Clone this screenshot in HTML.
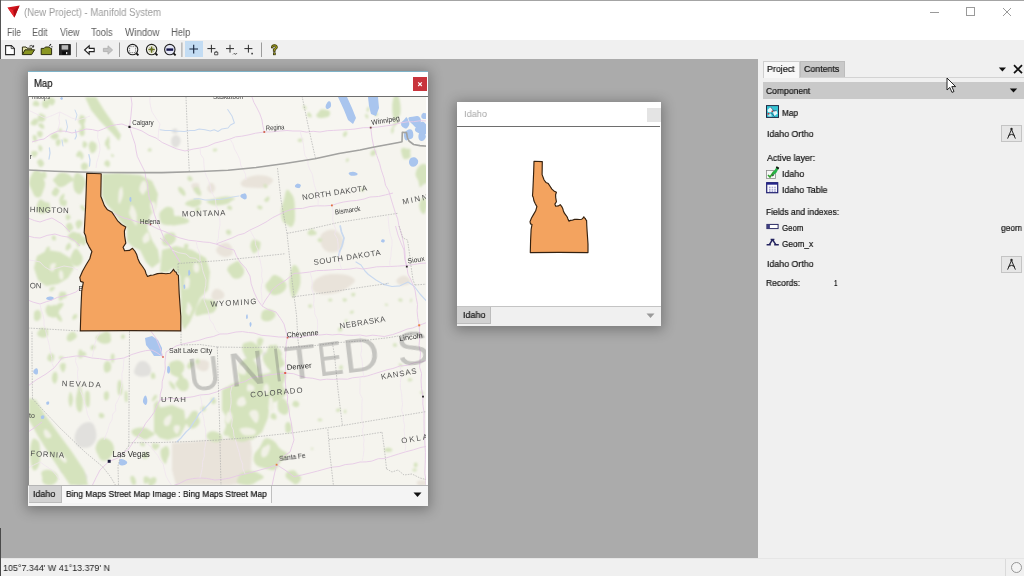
<!DOCTYPE html>
<html>
<head>
<meta charset="utf-8">
<title>(New Project) - Manifold System</title>
<style>
html,body{margin:0;padding:0;}
body{width:1024px;height:576px;overflow:hidden;position:relative;background:#ababab;font-family:"Liberation Sans",sans-serif;font-size:11px;color:#1a1a1a;}
.abs{position:absolute;}
.t{position:absolute;white-space:nowrap;line-height:14px;transform-origin:0 50%;will-change:transform;}
#titlebar{left:0;top:0;width:1024px;height:40px;background:#ffffff;}
#topline{left:0;top:0;width:1024px;height:1px;background:#a4a4a4;}
#leftline{left:0;top:0;width:1px;height:59px;background:#555;}
#toolbar{left:1px;top:40px;width:1023px;height:19px;background:#f0f0f0;}
#panel{left:757.5px;top:59px;width:267px;height:499px;background:#f0f0f0;}
#status{left:0;top:558.3px;width:1024px;height:18px;background:#f0f0f0;border-top:1px solid #e6e6e6;box-sizing:border-box;}

.sep{position:absolute;top:42px;width:1px;height:15px;background:#a0a0a0;}
.win{position:absolute;background:#fff;box-shadow:0 2px 12px 2px rgba(0,0,0,0.3);}
.p{font-size:11px;color:#1c1c1c;}
</style>
</head>
<body>
<!-- app chrome -->
<div id="titlebar" class="abs"></div>
<div id="topline" class="abs"></div>
<div id="toolbar" class="abs"></div>
<div id="leftline" class="abs"></div>
<div class="abs" style="left:0;top:528px;width:1.3px;height:48px;background:#4a4a4a;z-index:5;"></div>
<svg class="abs" style="left:7px;top:5px" width="15" height="14" viewBox="0 0 15 14"><path d="M0.5 2.6 L12.6 0.6 L7.4 12.6 Z" fill="#d0121b"/><path d="M0.5 2.6 L7.4 12.6 L6.4 5.2 Z" fill="#e8262c"/><path d="M6.4 5.2 L12.6 0.6 L7.4 12.6 Z" fill="#b00c14"/></svg>
<!-- toolbar icons -->
<svg class="abs" style="left:0;top:40px" width="300" height="19" viewBox="0 40 300 19">
 <!-- new -->
 <path d="M5.6 45.6 H11.4 L14.4 48.4 V54.6 H5.6 Z" fill="#fff" stroke="#2a2a2a" stroke-width="1.1"/><path d="M11.2 45.6 V48.6 H14.4" fill="none" stroke="#2a2a2a" stroke-width="0.8"/>
 <!-- open -->
 <path d="M22.4 54.4 V47 H26 L27 48.2 H31.4 V49.6" fill="#e8e6b0" stroke="#2c2c10" stroke-width="1"/>
 <path d="M22.4 54.6 L25 49.8 H34.6 L31.6 54.6 Z" fill="#8a9622" stroke="#2c2c10" stroke-width="1"/>
 <path d="M29.4 46.2 q2.4 -1.8 4 0.6 M33.6 45.2 v1.8 h-1.8" fill="none" stroke="#222" stroke-width="0.9"/>
 <!-- folder w/ arrow -->
 <path d="M41.2 54.6 V48.4 H44.2 L45.4 47 H49.4 L50.4 48.4 H51.6 V54.6 Z" fill="#8a9622" stroke="#2c2c10" stroke-width="1"/>
 <path d="M49.4 45.8 l1.6 -1.6 M51.4 46.6 l1 0.4" stroke="#222" stroke-width="1.1"/>
 <!-- save -->
 <rect x="59.5" y="44.6" width="10.8" height="10.2" fill="#262626" stroke="#111" stroke-width="0.8"/>
 <rect x="61.6" y="45.2" width="6.6" height="4.4" fill="#b9b9b9"/>
 <rect x="62.2" y="51.4" width="5.4" height="3.4" fill="#0c0c0c"/><rect x="66" y="52" width="1.3" height="2.2" fill="#d8d8d8"/>
 <rect x="76" y="42.5" width="1" height="14.5" fill="#9c9c9c"/>
 <!-- back -->
 <path d="M84.6 50 L89.2 45.8 V48.4 H94.2 V51.6 H89.2 V54.2 Z" fill="#fdfdfd" stroke="#222" stroke-width="1.1" stroke-linejoin="miter"/>
 <!-- forward (disabled) -->
 <path d="M112.6 50 L108 45.8 V48.4 H103.4 V51.6 H108 V54.2 Z" fill="#c4c4c4" stroke="#b0b0b0" stroke-width="0.9"/>
 <rect x="119" y="42.5" width="1" height="14.5" fill="#9c9c9c"/>
 <!-- zoom box -->
 <circle cx="132.6" cy="49.6" r="5.2" fill="#f6f6f6" stroke="#222" stroke-width="1.1"/>
 <rect x="129.6" y="46.6" width="6" height="6" fill="none" stroke="#444" stroke-width="0.7" stroke-dasharray="1 0.8"/>
 <path d="M136.4 53.4 L138.4 55.4" stroke="#111" stroke-width="1.8"/>
 <!-- zoom in -->
 <circle cx="151.6" cy="49.6" r="5.2" fill="#f1f1e4" stroke="#222" stroke-width="1.1"/>
 <path d="M148.4 49.6 h6.4 M151.6 46.4 v6.4" stroke="#66701a" stroke-width="1.5"/>
 <path d="M149.6 47.6 l1 1 m2 0 l1 -1 m-4 4 l1 -1 m2 0 l1 1" stroke="#333" stroke-width="0.6"/>
 <path d="M155.4 53.4 L157.4 55.4" stroke="#111" stroke-width="1.8"/>
 <!-- zoom out -->
 <circle cx="169.8" cy="49.6" r="5.2" fill="#e4e6f6" stroke="#222" stroke-width="1.1"/>
 <rect x="166.4" y="48.4" width="6.8" height="2.4" fill="#15154a"/>
 <path d="M173.6 53.4 L175.6 55.4" stroke="#111" stroke-width="1.8"/>
 <rect x="181.4" y="42.5" width="1" height="14.5" fill="#9c9c9c"/>
 <!-- selected + -->
 <rect x="185" y="41" width="18" height="16" fill="#c3dcf3"/>
 <path d="M189.4 49 h8.6 M193.7 44.8 v8.6" stroke="#14233c" stroke-width="1.1"/>
 <path d="M207.4 48.6 h8 M211.4 44.8 v7.8" stroke="#2c2c2c" stroke-width="1"/>
 <path d="M214.6 52.2 h3.2 v2.6 h-3.2 z M215.2 52.2 q1.2 -1.6 2.2 0" fill="none" stroke="#333" stroke-width="0.8"/>
 <path d="M226 48.6 h8 M230 44.8 v7.8" stroke="#2c2c2c" stroke-width="1"/>
 <path d="M233 54.4 q1 -1.8 2 -0.4 q1 1 2 -1" fill="none" stroke="#444" stroke-width="0.8"/>
 <path d="M244.4 48.6 h8 M248.4 44.8 v7.8" stroke="#2c2c2c" stroke-width="1"/>
 <rect x="251.4" y="52.8" width="1.4" height="1.6" fill="#222"/>
 <rect x="261" y="42.5" width="1" height="14.5" fill="#9c9c9c"/>
 <!-- help -->
 <path d="M271.4 48 q-0.4 -3.4 3 -3.4 q3.2 0.2 3 2.8 q-0.2 1.6 -2.2 2.4 v1.8 h-1.8 v-2.8 q2 -0.6 2 -1.6 q0 -1 -1.2 -1 q-1.2 0 -1.2 1.6 z" fill="#a8a418" stroke="#2a2a08" stroke-width="0.8"/>
 <rect x="273.4" y="52.8" width="1.9" height="2" fill="#a8a418" stroke="#2a2a08" stroke-width="0.7"/>
</svg>
<!-- window controls -->
<svg class="abs" style="left:920px;top:4px" width="100" height="18" viewBox="0 0 100 18">
<path d="M10 8.5 H19" stroke="#9a9a9a" stroke-width="1" fill="none"/>
<rect x="46.5" y="3.5" width="8" height="8" stroke="#9a9a9a" stroke-width="1" fill="none"/>
<path d="M83 4 L91 12 M91 4 L83 12" stroke="#9a9a9a" stroke-width="1" fill="none"/>
</svg>

<!-- MAP WINDOW -->
<div class="win" id="mapwin" style="left:28px;top:71px;width:400px;height:434.6px;">
  <div class="abs" style="left:0;top:0;width:400px;height:1px;background:#7fb3c8;"></div>
  <div class="abs" style="left:385px;top:6px;width:14px;height:14px;background:#c8343c;"></div>
  <svg class="abs" style="left:385px;top:6px" width="14" height="14"><path d="M5.2 5.4 L8.8 9 M8.8 5.4 L5.2 9" stroke="#fff" stroke-width="1.2"/></svg>
  <div class="abs" style="left:0;top:25px;width:400px;height:1px;background:#6e6e6e;"></div>
  <div class="abs" style="left:0;top:25px;width:1px;height:408px;background:#8c8c8c;"></div>
  <div class="abs" id="mapbox" style="left:1px;top:26px;width:397.4px;height:388px;background:#f4f2ea;overflow:hidden;"><svg class="abs" style="left:0;top:0" width="398" height="388" viewBox="29 97 398 388">
<defs><filter id="b1" x="-5%" y="-5%" width="110%" height="110%"><feGaussianBlur stdDeviation="0.9"/></filter><filter id="b2"><feGaussianBlur stdDeviation="0.5"/></filter><filter id="b3"><feGaussianBlur stdDeviation="0.35"/></filter></defs>
<rect x="29" y="97" width="398" height="388" fill="#f5f4ee"/>
<path d="M28.0 170.0 L55.0 171.3 L80.0 172.0 L105.0 172.5 L130.0 172.6 L162.0 172.6 L200.0 171.5 L228.0 170.2 L256.0 167.5 L285.0 163.5 L315.0 158.7 L339.0 153.5 L360.0 150.0 L373.0 147.3 L400.0 142.2 L402.0 141.8 L402.3 132.2 L406.5 132.6 L407.5 138.0 L409.0 141.0 L413.6 144.5 L420.0 145.6 L428.0 146.2 L428 96 L28 96 Z" fill="#f7f6f1"/>
<g filter="url(#b1)" fill="#e9e3da"><path d="M272.0 178.5 Q274.1 180.3 272.0 182.4 Q269.8 184.5 266.6 186.4 Q263.3 188.3 258.6 187.9 Q254.0 187.5 248.8 187.5 Q243.7 187.5 241.6 185.4 Q239.5 183.3 242.1 181.1 Q244.7 178.9 248.4 177.3 Q252.1 175.7 257.0 175.3 Q261.8 174.9 265.8 175.7 Q269.8 176.6 272.0 178.5Z"/><path d="M199.3 185.1 Q199.2 186.5 199.5 188.0 Q199.8 189.6 198.3 190.0 Q196.8 190.4 195.5 190.3 Q194.3 190.3 193.3 189.5 Q192.4 188.8 191.9 187.6 Q191.4 186.5 191.4 185.0 Q191.4 183.6 192.9 183.2 Q194.3 182.9 195.5 182.9 Q196.7 182.8 198.0 183.3 Q199.4 183.7 199.3 185.1Z"/><path d="M215.0 186.8 Q215.5 188.0 215.0 189.2 Q214.5 190.4 213.7 191.7 Q212.9 192.9 211.5 192.9 Q210.1 192.9 209.0 191.9 Q207.8 191.0 207.3 189.5 Q206.7 188.0 207.5 186.7 Q208.4 185.5 209.2 184.0 Q209.9 182.6 211.5 182.7 Q213.0 182.9 213.8 184.2 Q214.5 185.5 215.0 186.8Z"/><path d="M232.4 248.4 Q233.2 250.2 232.9 252.4 Q232.6 254.5 230.2 255.8 Q227.8 257.1 224.9 256.9 Q222.0 256.6 220.0 255.3 Q217.9 253.9 216.6 252.1 Q215.3 250.2 216.6 248.4 Q217.9 246.5 219.8 244.8 Q221.6 243.1 224.9 242.8 Q228.2 242.5 229.9 244.5 Q231.6 246.5 232.4 248.4Z"/><path d="M223.8 293.1 Q224.7 294.8 224.2 296.6 Q223.7 298.4 221.6 299.0 Q219.6 299.6 217.5 300.2 Q215.4 300.9 213.4 299.8 Q211.4 298.7 211.3 296.7 Q211.3 294.8 211.9 293.1 Q212.4 291.5 213.9 290.0 Q215.4 288.6 217.6 288.9 Q219.9 289.2 221.4 290.4 Q223.0 291.5 223.8 293.1Z"/><path d="M342.5 237.4 Q344.2 241.1 343.1 245.0 Q341.9 248.9 338.7 250.7 Q335.4 252.4 332.2 252.5 Q329.0 252.6 326.1 251.0 Q323.3 249.5 321.8 246.3 Q320.3 243.2 320.1 239.2 Q319.9 235.1 323.1 232.7 Q326.3 230.2 330.2 229.7 Q334.1 229.1 337.4 231.4 Q340.7 233.7 342.5 237.4Z"/><path d="M353.3 278.0 Q356.7 280.5 353.0 283.6 Q349.3 286.7 344.9 289.4 Q340.6 292.1 333.4 293.5 Q326.1 294.9 319.7 293.7 Q313.3 292.4 312.4 289.2 Q311.5 286.1 312.8 283.0 Q314.1 280.0 319.1 277.3 Q324.2 274.6 331.1 274.1 Q338.1 273.5 344.0 274.5 Q350.0 275.4 353.3 278.0Z"/><path d="M172.0 443.0 L200.0 441.0 L232.0 438.0 L250.0 437.0 L252.0 452.0 L250.0 482.0 L230.0 485.0 L176.0 485.0 L172.0 470.0Z"/><path d="M209.1 364.0 Q208.9 366.0 208.7 367.7 Q208.5 369.4 206.8 370.6 Q205.2 371.7 203.2 371.2 Q201.2 370.7 199.6 369.9 Q198.1 369.1 196.4 367.5 Q194.8 366.0 195.8 364.1 Q196.8 362.1 198.6 360.8 Q200.5 359.4 202.9 359.7 Q205.3 360.0 207.3 361.1 Q209.3 362.1 209.1 364.0Z"/><path d="M409.9 279.5 Q411.0 281.0 410.2 282.7 Q409.4 284.3 407.1 284.7 Q404.8 285.0 402.8 285.5 Q400.7 286.0 399.3 284.8 Q397.8 283.7 396.7 282.3 Q395.6 281.0 396.7 279.7 Q397.8 278.3 399.3 277.2 Q400.8 276.2 403.1 275.8 Q405.5 275.5 407.2 276.7 Q408.9 277.9 409.9 279.5Z"/><path d="M427.6 482.0 Q427.5 483.0 427.2 483.9 Q426.9 484.8 425.3 485.3 Q423.8 485.8 421.8 486.1 Q419.8 486.3 418.7 485.5 Q417.5 484.6 417.0 483.8 Q416.4 483.0 416.7 482.1 Q416.9 481.1 418.6 480.8 Q420.4 480.5 422.2 480.3 Q423.9 480.0 425.8 480.5 Q427.7 480.9 427.6 482.0Z"/></g>
<g filter="url(#b1)" fill="#e1e0dd"><path d="M180.3 138.8 Q181.0 141.0 180.2 143.0 Q179.3 145.1 177.9 146.4 Q176.4 147.8 174.6 147.5 Q172.7 147.1 171.9 145.1 Q171.1 143.1 171.1 141.0 Q171.1 139.0 172.1 137.4 Q173.2 135.8 174.8 135.3 Q176.4 134.7 178.0 135.7 Q179.6 136.7 180.3 138.8Z"/><path d="M96.4 434.4 Q96.7 438.7 94.4 442.5 Q92.0 446.2 88.6 447.2 Q85.2 448.1 81.5 447.6 Q77.8 447.0 75.7 442.7 Q73.6 438.4 75.5 433.3 Q77.3 428.1 80.9 425.0 Q84.5 421.9 88.6 421.9 Q92.7 421.8 94.4 425.9 Q96.2 430.0 96.4 434.4Z"/><path d="M68.3 464.4 Q69.0 466.6 68.2 468.7 Q67.5 470.8 66.2 472.1 Q64.9 473.3 63.3 473.0 Q61.7 472.7 60.8 470.7 Q59.9 468.8 60.1 466.6 Q60.2 464.4 61.1 462.9 Q62.1 461.3 63.4 461.0 Q64.8 460.6 66.2 461.4 Q67.6 462.2 68.3 464.4Z"/><path d="M150.4 366.9 Q151.6 369.6 150.9 372.6 Q150.1 375.6 147.2 376.1 Q144.3 376.7 141.5 376.8 Q138.8 376.9 136.0 375.0 Q133.3 373.1 134.4 369.9 Q135.4 366.8 136.9 364.2 Q138.4 361.5 141.5 361.1 Q144.6 360.7 146.9 362.5 Q149.3 364.2 150.4 366.9Z"/><path d="M86.4 474.8 Q88.2 477.4 86.3 479.9 Q84.4 482.5 82.3 484.6 Q80.3 486.8 77.9 485.3 Q75.4 483.8 74.0 481.8 Q72.7 479.8 71.5 476.9 Q70.3 474.0 72.6 472.1 Q74.9 470.1 77.4 470.3 Q79.9 470.4 82.3 471.3 Q84.6 472.1 86.4 474.8Z"/><path d="M177.5 130.1 Q177.9 131.0 177.7 132.1 Q177.5 133.1 176.5 133.3 Q175.4 133.5 174.6 133.4 Q173.7 133.3 172.7 132.8 Q171.7 132.2 171.8 131.0 Q171.9 129.9 172.8 129.3 Q173.7 128.8 174.6 128.5 Q175.5 128.2 176.3 128.7 Q177.2 129.2 177.5 130.1Z"/><path d="M251.7 354.0 Q252.2 355.0 251.8 356.0 Q251.3 357.0 250.2 357.7 Q249.2 358.4 247.9 358.1 Q246.5 357.9 245.9 357.0 Q245.2 356.0 245.0 355.0 Q244.9 353.9 245.7 353.0 Q246.6 352.1 247.9 351.9 Q249.2 351.7 250.2 352.4 Q251.2 353.1 251.7 354.0Z"/><path d="M267.8 353.7 Q268.3 354.5 267.9 355.4 Q267.5 356.2 266.5 356.8 Q265.6 357.4 264.7 356.9 Q263.7 356.3 262.7 355.9 Q261.8 355.5 262.3 354.6 Q262.7 353.8 263.0 353.0 Q263.3 352.1 264.4 352.0 Q265.5 352.0 266.4 352.4 Q267.3 352.9 267.8 353.7Z"/><path d="M280.9 352.1 Q281.6 353.0 281.0 354.0 Q280.4 355.0 279.4 355.4 Q278.5 355.9 277.4 355.9 Q276.3 355.9 275.5 355.0 Q274.8 354.2 274.9 353.1 Q275.1 351.9 275.8 351.2 Q276.6 350.5 277.5 350.3 Q278.5 350.1 279.4 350.6 Q280.3 351.1 280.9 352.1Z"/></g>
<g filter="url(#b1)" fill="#d5e3bd"><path d="M85.0 97.0 L96.0 97.0 L104.0 110.0 L113.0 123.0 L121.0 135.0 L119.0 141.0 L112.0 133.0 L100.0 121.0 L91.0 110.0Z"/><path d="M85.3 118.3 Q85.6 120.0 85.1 121.4 Q84.6 122.8 84.0 124.5 Q83.3 126.2 82.2 125.2 Q81.1 124.2 79.9 123.9 Q78.7 123.6 78.5 121.8 Q78.3 120.0 79.0 118.7 Q79.6 117.4 80.2 115.8 Q80.8 114.3 81.8 115.1 Q82.9 115.9 84.0 116.2 Q85.1 116.6 85.3 118.3Z"/><path d="M96.8 146.0 Q96.7 147.5 96.4 148.7 Q96.1 149.9 95.3 151.2 Q94.5 152.5 92.8 153.1 Q91.2 153.8 90.5 151.9 Q89.9 150.0 89.3 148.8 Q88.8 147.5 88.7 145.8 Q88.6 144.0 89.8 142.4 Q91.0 140.9 92.8 141.4 Q94.6 142.0 95.7 143.2 Q96.8 144.5 96.8 146.0Z"/><path d="M87.2 143.4 Q87.7 144.5 86.8 145.2 Q86.0 146.0 85.7 147.3 Q85.4 148.5 84.6 148.0 Q83.8 147.4 83.4 146.8 Q82.9 146.1 82.7 145.3 Q82.6 144.5 82.6 143.6 Q82.7 142.7 83.1 141.6 Q83.6 140.5 84.4 141.2 Q85.1 141.8 85.9 142.1 Q86.6 142.3 87.2 143.4Z"/><path d="M54.9 100.1 Q55.3 101.5 54.7 102.7 Q54.0 103.9 53.1 104.9 Q52.3 105.9 51.2 105.3 Q50.1 104.7 49.4 104.1 Q48.6 103.4 48.2 102.5 Q47.7 101.5 47.6 100.0 Q47.4 98.6 48.6 98.0 Q49.8 97.4 51.0 97.6 Q52.1 97.7 53.3 98.2 Q54.4 98.7 54.9 100.1Z"/><path d="M44.5 181.0 Q45.7 184.0 44.6 187.0 Q43.4 190.1 42.0 193.9 Q40.7 197.8 37.6 197.4 Q34.5 197.0 33.2 193.4 Q31.9 189.8 30.2 186.9 Q28.6 184.0 29.5 180.4 Q30.5 176.8 32.3 173.2 Q34.2 169.6 37.4 170.2 Q40.5 170.8 42.0 174.4 Q43.4 178.0 44.5 181.0Z"/><path d="M72.7 177.9 Q74.9 180.0 71.6 181.6 Q68.2 183.2 66.6 184.8 Q64.9 186.3 61.7 187.0 Q58.4 187.7 57.0 185.5 Q55.6 183.3 53.8 181.6 Q52.1 180.0 54.1 178.5 Q56.1 177.0 57.4 174.8 Q58.6 172.7 62.1 172.5 Q65.6 172.3 68.0 174.0 Q70.4 175.7 72.7 177.9Z"/><path d="M85.3 180.8 Q86.4 184.0 84.8 186.6 Q83.3 189.2 82.2 191.9 Q81.1 194.6 79.1 194.3 Q77.0 194.0 75.5 192.1 Q73.9 190.2 73.5 187.1 Q73.2 184.0 73.2 180.5 Q73.2 176.9 74.9 174.4 Q76.7 172.0 78.7 173.3 Q80.8 174.6 82.6 176.1 Q84.3 177.5 85.3 180.8Z"/><path d="M49.7 204.3 Q49.2 206.0 50.4 208.0 Q51.5 210.1 49.1 211.2 Q46.8 212.4 43.7 213.2 Q40.6 214.0 38.2 212.2 Q35.9 210.4 36.6 208.2 Q37.4 206.0 37.7 204.4 Q38.1 202.8 39.7 201.2 Q41.2 199.5 43.4 201.0 Q45.5 202.5 47.9 202.5 Q50.3 202.6 49.7 204.3Z"/><path d="M102.0 174.0 L118.0 173.0 L140.0 175.0 L152.0 181.0 L158.0 194.0 L156.0 207.0 L150.0 216.0 L147.0 228.0 L152.0 240.0 L158.0 250.0 L160.0 262.0 L152.0 268.0 L146.0 262.0 L140.0 250.0 L133.0 247.0 L127.0 241.0 L127.0 228.0 L120.0 221.0 L112.0 210.0 L106.0 204.0 L102.0 196.0Z"/><path d="M148.1 185.8 Q148.5 189.0 147.5 191.7 Q146.5 194.5 144.2 196.0 Q141.8 197.6 138.5 199.1 Q135.2 200.6 133.3 197.5 Q131.4 194.5 130.3 191.8 Q129.1 189.0 129.8 185.9 Q130.5 182.8 132.8 179.9 Q135.1 177.0 138.5 178.6 Q141.8 180.3 144.8 181.5 Q147.7 182.7 148.1 185.8Z"/><path d="M174.7 216.8 Q175.7 219.2 174.6 221.8 Q173.4 224.5 170.2 225.1 Q167.0 225.7 163.8 224.6 Q160.6 223.6 160.2 220.6 Q159.7 217.7 159.3 215.4 Q159.0 213.1 160.6 211.4 Q162.2 209.7 164.6 207.9 Q167.0 206.0 170.3 207.1 Q173.6 208.1 173.7 211.3 Q173.7 214.5 174.7 216.8Z"/><path d="M175.2 234.5 Q175.8 236.5 175.9 238.3 Q175.9 240.2 174.5 241.8 Q173.1 243.5 170.9 244.8 Q168.7 246.1 166.0 245.9 Q163.3 245.7 162.5 243.7 Q161.7 241.6 162.5 239.8 Q163.2 238.0 163.8 236.0 Q164.3 234.0 166.8 233.2 Q169.3 232.4 172.0 232.4 Q174.7 232.4 175.2 234.5Z"/><path d="M134.3 204.7 Q135.4 209.0 134.2 213.1 Q133.0 217.2 130.7 219.3 Q128.5 221.4 125.9 221.7 Q123.4 221.9 121.2 219.6 Q119.1 217.2 119.2 213.1 Q119.4 209.0 119.0 204.6 Q118.5 200.1 120.9 197.7 Q123.3 195.3 126.0 195.0 Q128.8 194.8 131.0 197.6 Q133.2 200.4 134.3 204.7Z"/><path d="M187.6 219.3 Q190.1 220.5 188.8 222.0 Q187.5 223.5 183.7 224.0 Q179.9 224.5 175.8 225.3 Q171.7 226.2 169.8 224.5 Q167.9 222.9 166.8 221.7 Q165.8 220.5 166.3 219.2 Q166.8 217.8 169.9 217.1 Q172.9 216.3 176.7 216.1 Q180.6 215.8 182.8 217.0 Q185.1 218.1 187.6 219.3Z"/><path d="M201.1 200.6 Q201.2 201.9 201.1 203.1 Q201.1 204.3 199.4 205.2 Q197.7 206.2 195.5 207.0 Q193.2 207.7 191.7 206.9 Q190.2 206.0 187.2 205.4 Q184.1 204.9 185.5 203.1 Q186.8 201.3 189.5 200.5 Q192.2 199.7 194.4 199.1 Q196.6 198.6 198.8 198.9 Q201.1 199.2 201.1 200.6Z"/><path d="M234.1 197.9 Q236.2 198.7 233.5 199.8 Q230.9 200.8 229.7 202.6 Q228.4 204.3 221.7 205.1 Q214.9 205.9 211.8 204.7 Q208.8 203.4 207.0 202.4 Q205.3 201.4 208.9 200.3 Q212.5 199.2 215.1 198.5 Q217.8 197.7 221.7 197.0 Q225.7 196.3 228.9 196.7 Q232.1 197.2 234.1 197.9Z"/><path d="M162.0 250.0 L176.0 246.0 L192.0 250.0 L206.0 258.0 L210.0 272.0 L208.0 290.0 L200.0 298.0 L196.0 308.0 L190.0 322.0 L184.0 330.0 L181.0 322.0 L181.0 300.0 L180.0 276.0 L176.0 271.0 L173.0 268.0 L168.0 272.0 L160.0 272.0Z"/><path d="M216.2 308.5 Q214.6 312.5 211.0 313.3 Q207.3 314.1 205.2 314.0 Q203.1 314.0 199.0 315.5 Q194.9 317.1 195.1 313.0 Q195.3 309.0 197.2 306.3 Q199.1 303.6 200.5 300.5 Q201.8 297.5 204.4 298.7 Q206.9 300.0 209.8 299.6 Q212.8 299.2 215.3 301.8 Q217.7 304.4 216.2 308.5Z"/><path d="M37.0 256.0 L48.0 250.0 L60.0 252.0 L70.0 258.0 L74.0 268.0 L68.0 278.0 L58.0 284.0 L46.0 286.0 L38.0 280.0 L34.0 268.0Z"/><path d="M81.6 235.8 Q83.5 237.0 82.4 238.6 Q81.3 240.3 79.1 240.7 Q76.9 241.1 74.9 241.2 Q73.0 241.4 71.7 240.4 Q70.5 239.4 68.7 238.2 Q66.9 237.0 68.0 235.5 Q69.2 234.0 70.9 232.7 Q72.5 231.4 74.7 232.1 Q76.9 232.7 78.3 233.6 Q79.7 234.5 81.6 235.8Z"/><path d="M81.4 254.7 Q83.0 256.5 82.6 259.7 Q82.2 262.9 80.4 264.6 Q78.6 266.3 76.5 266.2 Q74.5 266.1 72.8 264.3 Q71.2 262.5 70.7 259.5 Q70.2 256.5 71.5 254.4 Q72.8 252.3 73.8 250.3 Q74.8 248.3 76.4 248.7 Q78.1 249.1 78.9 251.0 Q79.7 252.9 81.4 254.7Z"/><path d="M40.9 314.6 Q40.9 316.0 40.8 317.3 Q40.8 318.5 39.9 319.3 Q39.1 320.1 37.8 320.7 Q36.6 321.3 35.2 320.5 Q33.9 319.7 34.0 317.9 Q34.1 316.0 34.0 314.1 Q33.9 312.3 35.2 311.1 Q36.4 309.9 38.0 309.9 Q39.6 309.9 40.3 311.6 Q41.0 313.3 40.9 314.6Z"/><path d="M59.4 309.6 Q59.0 312.0 58.5 313.7 Q58.1 315.4 56.8 316.4 Q55.5 317.4 54.0 317.5 Q52.5 317.5 50.6 316.9 Q48.8 316.4 47.7 314.2 Q46.6 312.0 47.4 309.5 Q48.2 307.0 50.2 306.2 Q52.2 305.4 54.1 305.1 Q56.0 304.7 57.9 305.9 Q59.7 307.1 59.4 309.6Z"/><path d="M48.1 330.9 Q47.5 332.5 47.9 333.9 Q48.3 335.4 46.8 336.6 Q45.3 337.8 43.1 337.7 Q40.8 337.5 39.1 336.5 Q37.4 335.5 37.2 334.0 Q37.1 332.5 38.1 331.4 Q39.1 330.4 40.0 328.9 Q40.8 327.5 42.7 328.1 Q44.7 328.7 46.7 329.0 Q48.7 329.4 48.1 330.9Z"/><path d="M76.6 334.9 Q77.4 336.5 76.1 337.7 Q74.8 339.0 73.6 339.8 Q72.5 340.5 70.7 341.2 Q69.0 341.9 67.7 340.7 Q66.4 339.5 66.7 338.0 Q67.0 336.5 67.4 335.5 Q67.9 334.4 68.8 333.8 Q69.8 333.1 71.3 332.1 Q72.9 331.2 74.4 332.3 Q75.8 333.4 76.6 334.9Z"/><path d="M110.6 335.7 Q110.2 337.5 111.0 339.4 Q111.7 341.4 109.3 342.8 Q106.9 344.2 103.8 343.7 Q100.6 343.2 98.9 341.8 Q97.2 340.4 96.0 339.0 Q94.8 337.5 96.4 336.2 Q98.1 335.0 99.9 334.4 Q101.6 333.8 104.3 332.3 Q106.9 330.8 108.9 332.4 Q111.0 334.0 110.6 335.7Z"/><path d="M59.4 266.9 Q60.1 269.0 59.8 271.4 Q59.6 273.8 57.0 274.7 Q54.4 275.5 51.8 276.1 Q49.2 276.6 46.9 275.1 Q44.7 273.7 44.8 271.3 Q44.9 269.0 45.5 267.1 Q46.2 265.3 48.0 264.1 Q49.7 262.9 52.0 263.0 Q54.2 263.0 56.5 263.9 Q58.7 264.7 59.4 266.9Z"/><path d="M260.6 244.1 Q260.2 246.5 260.0 248.3 Q259.7 250.1 258.3 250.7 Q256.8 251.3 255.1 252.8 Q253.4 254.2 252.4 252.1 Q251.4 250.0 250.8 248.2 Q250.1 246.5 250.5 244.5 Q250.8 242.5 252.1 240.7 Q253.4 238.8 255.3 239.7 Q257.1 240.6 259.1 241.2 Q261.1 241.7 260.6 244.1Z"/><path d="M244.0 272.8 Q243.3 275.5 241.1 277.2 Q238.8 278.9 235.9 278.8 Q233.0 278.8 231.5 276.4 Q229.9 274.0 228.2 272.0 Q226.4 269.9 227.7 267.7 Q229.0 265.4 231.0 264.4 Q233.0 263.4 235.7 261.7 Q238.4 260.0 240.0 262.8 Q241.6 265.5 243.2 267.8 Q244.7 270.1 244.0 272.8Z"/><path d="M285.2 282.2 Q287.4 285.0 285.9 288.3 Q284.4 291.7 281.6 293.0 Q278.8 294.4 275.8 295.0 Q272.9 295.6 270.3 293.6 Q267.6 291.7 266.0 288.3 Q264.3 285.0 267.1 282.5 Q269.8 280.1 271.3 277.1 Q272.8 274.2 275.7 275.1 Q278.6 276.1 280.8 277.8 Q283.0 279.4 285.2 282.2Z"/><path d="M275.2 313.0 Q276.1 315.0 274.9 316.8 Q273.7 318.5 272.0 319.7 Q270.2 320.9 267.9 321.3 Q265.5 321.6 263.2 320.5 Q260.9 319.4 261.1 317.2 Q261.2 315.0 261.6 313.1 Q262.0 311.2 263.9 310.3 Q265.8 309.3 268.0 309.3 Q270.2 309.3 272.2 310.2 Q274.3 311.1 275.2 313.0Z"/><path d="M255.0 345.7 Q254.8 348.5 254.4 350.7 Q254.0 353.0 252.4 354.3 Q250.8 355.5 248.7 356.5 Q246.7 357.5 245.1 355.5 Q243.6 353.4 242.6 351.0 Q241.6 348.5 242.3 345.7 Q242.9 342.9 245.1 342.7 Q247.4 342.4 249.2 341.8 Q250.9 341.1 253.0 342.0 Q255.1 342.9 255.0 345.7Z"/><path d="M300.4 277.0 Q301.0 283.0 299.5 287.1 Q298.0 291.2 296.7 293.6 Q295.5 296.1 293.9 297.4 Q292.2 298.7 291.2 294.8 Q290.2 290.9 289.5 286.9 Q288.8 283.0 289.5 279.1 Q290.2 275.1 291.1 270.3 Q292.0 265.5 294.1 265.0 Q296.1 264.5 298.0 267.8 Q299.8 271.0 300.4 277.0Z"/><path d="M294.7 204.1 Q294.8 209.5 295.0 215.5 Q295.3 221.5 293.3 225.0 Q291.3 228.5 289.3 226.2 Q287.2 224.0 284.7 223.2 Q282.3 222.5 281.3 216.0 Q280.4 209.5 282.2 204.8 Q284.1 200.2 285.2 194.0 Q286.3 187.9 288.7 190.4 Q291.1 192.8 292.8 195.7 Q294.6 198.7 294.7 204.1Z"/><path d="M315.7 231.8 Q317.3 232.5 316.6 233.7 Q315.9 235.0 314.2 235.1 Q312.6 235.2 311.4 235.4 Q310.2 235.7 309.0 235.1 Q307.8 234.6 307.6 233.5 Q307.4 232.5 308.0 231.7 Q308.5 230.8 309.4 230.2 Q310.3 229.5 311.7 229.1 Q313.1 228.7 313.6 229.9 Q314.1 231.0 315.7 231.8Z"/><path d="M330.2 112.8 Q330.2 114.5 329.3 115.8 Q328.5 117.1 326.5 117.3 Q324.5 117.5 322.8 117.9 Q321.1 118.3 319.0 117.8 Q316.9 117.3 316.4 115.9 Q315.9 114.5 317.4 113.5 Q318.8 112.5 319.5 110.8 Q320.2 109.0 322.9 109.2 Q325.5 109.5 327.9 110.3 Q330.3 111.1 330.2 112.8Z"/><path d="M400.5 106.0 Q400.7 109.0 400.5 112.0 Q400.3 115.1 399.0 116.2 Q397.7 117.3 396.1 119.8 Q394.5 122.3 393.6 118.7 Q392.7 115.1 392.4 112.0 Q392.2 109.0 392.2 105.6 Q392.3 102.3 393.3 98.5 Q394.4 94.8 396.5 95.1 Q398.5 95.4 399.4 99.2 Q400.3 103.0 400.5 106.0Z"/><path d="M410.5 150.8 Q409.8 153.0 410.5 155.2 Q411.1 157.4 409.2 158.2 Q407.3 158.9 405.4 159.2 Q403.6 159.4 402.9 157.5 Q402.1 155.7 401.8 154.3 Q401.5 153.0 401.0 151.0 Q400.5 149.1 402.2 148.3 Q403.9 147.5 405.3 148.2 Q406.8 148.8 408.9 148.7 Q411.1 148.5 410.5 150.8Z"/><path d="M428.3 170.6 Q428.5 175.0 428.1 179.2 Q427.7 183.3 425.6 183.4 Q423.4 183.6 421.6 186.2 Q419.7 188.9 419.1 184.5 Q418.4 180.2 416.6 177.6 Q414.7 175.0 416.0 171.6 Q417.3 168.1 418.8 166.4 Q420.3 164.7 422.1 164.0 Q423.9 163.2 426.0 164.7 Q428.1 166.1 428.3 170.6Z"/><path d="M426.9 203.0 Q427.3 205.5 426.7 207.7 Q426.1 209.8 425.4 212.3 Q424.6 214.7 423.1 213.9 Q421.7 213.1 420.8 211.4 Q419.9 209.8 419.5 207.6 Q419.0 205.5 419.5 203.5 Q420.0 201.4 420.9 199.8 Q421.7 198.1 423.1 197.8 Q424.4 197.5 425.5 199.0 Q426.6 200.6 426.9 203.0Z"/><path d="M72.6 396.6 Q73.3 399.0 72.7 401.8 Q72.1 404.7 71.3 406.3 Q70.5 408.0 69.8 406.2 Q69.0 404.3 68.6 401.7 Q68.2 399.0 68.7 396.6 Q69.2 394.2 69.8 392.6 Q70.5 391.1 71.2 392.7 Q71.8 394.2 72.6 396.6Z"/><path d="M82.6 394.9 Q83.4 400.0 82.7 405.4 Q82.0 410.9 80.8 411.8 Q79.5 412.7 78.3 411.6 Q77.1 410.5 76.1 405.2 Q75.2 400.0 76.4 395.7 Q77.5 391.5 78.5 387.0 Q79.5 382.6 80.7 386.2 Q81.9 389.8 82.6 394.9Z"/><path d="M89.8 395.3 Q90.0 399.0 89.8 402.7 Q89.6 406.4 88.5 407.0 Q87.5 407.5 86.6 406.5 Q85.7 405.4 85.2 402.2 Q84.8 399.0 85.0 395.1 Q85.3 391.1 86.4 390.9 Q87.5 390.7 88.5 391.1 Q89.6 391.6 89.8 395.3Z"/><path d="M108.8 393.3 Q109.3 395.5 108.8 397.6 Q108.3 399.7 107.1 400.2 Q106.0 400.7 105.0 399.9 Q104.0 399.1 103.9 397.3 Q103.7 395.5 104.0 393.9 Q104.3 392.3 105.1 391.8 Q106.0 391.2 107.2 391.2 Q108.4 391.1 108.8 393.3Z"/><path d="M111.0 364.8 Q111.5 367.0 110.9 369.1 Q110.4 371.1 109.2 371.8 Q108.0 372.5 106.3 372.7 Q104.7 372.8 104.0 369.9 Q103.3 367.0 104.1 364.3 Q104.9 361.6 106.5 361.2 Q108.0 360.8 109.2 361.7 Q110.5 362.7 111.0 364.8Z"/><path d="M122.4 386.1 Q122.7 389.0 122.4 391.8 Q122.1 394.5 121.0 395.1 Q120.0 395.6 119.0 395.1 Q117.9 394.5 117.6 391.8 Q117.4 389.0 117.4 385.5 Q117.4 382.0 118.7 380.6 Q120.0 379.1 121.1 381.2 Q122.2 383.2 122.4 386.1Z"/><path d="M127.6 394.2 Q127.7 396.5 127.7 399.3 Q127.7 402.2 126.9 402.3 Q126.0 402.4 125.3 401.6 Q124.7 400.8 124.6 398.6 Q124.5 396.5 124.6 394.3 Q124.7 392.2 125.3 391.1 Q126.0 390.1 126.7 391.0 Q127.4 391.9 127.6 394.2Z"/><path d="M103.9 414.6 Q104.5 415.5 104.2 416.7 Q104.0 418.0 102.7 418.1 Q101.5 418.1 100.4 417.9 Q99.3 417.7 99.0 416.6 Q98.7 415.5 98.9 414.3 Q99.1 413.1 100.3 413.0 Q101.5 412.8 102.4 413.2 Q103.4 413.6 103.9 414.6Z"/><path d="M57.6 375.5 Q57.7 378.0 57.3 379.8 Q56.8 381.7 55.9 383.0 Q55.0 384.3 53.9 383.3 Q52.8 382.3 52.2 380.2 Q51.6 378.0 52.2 375.7 Q52.7 373.4 53.9 372.4 Q55.0 371.4 56.3 372.2 Q57.5 373.0 57.6 375.5Z"/><path d="M65.7 364.9 Q65.8 367.0 65.4 368.6 Q64.9 370.2 64.0 371.7 Q63.0 373.2 62.1 371.6 Q61.3 369.9 60.5 368.5 Q59.7 367.0 60.2 365.1 Q60.7 363.2 61.9 363.2 Q63.0 363.1 64.2 363.0 Q65.5 362.9 65.7 364.9Z"/><path d="M29.0 398.0 L36.0 400.0 L45.0 415.0 L58.0 433.0 L72.0 452.0 L84.0 470.0 L88.0 485.0 L70.0 485.0 L60.0 470.0 L48.0 452.0 L38.0 436.0 L29.0 420.0Z"/><path d="M113.6 445.9 Q114.8 449.5 113.3 452.8 Q111.7 456.1 109.4 458.4 Q107.1 460.7 103.9 460.8 Q100.8 461.0 99.4 457.8 Q98.0 454.6 96.5 452.0 Q94.9 449.5 95.8 446.4 Q96.7 443.3 98.7 440.6 Q100.8 437.8 104.0 437.9 Q107.2 438.0 109.8 440.2 Q112.5 442.3 113.6 445.9Z"/><path d="M39.9 447.3 Q40.2 453.0 39.9 458.8 Q39.6 464.6 38.0 467.5 Q36.3 470.4 34.5 470.4 Q32.7 470.4 31.6 466.2 Q30.5 461.9 30.3 457.5 Q30.0 453.0 30.4 448.7 Q30.7 444.5 31.8 441.1 Q32.9 437.7 34.4 438.6 Q35.9 439.4 37.7 440.5 Q39.5 441.7 39.9 447.3Z"/><path d="M57.4 475.2 Q58.3 477.5 57.6 479.9 Q56.8 482.2 54.4 483.7 Q52.0 485.2 49.0 485.3 Q45.9 485.4 43.8 483.6 Q41.8 481.9 42.2 479.7 Q42.7 477.5 41.6 474.9 Q40.4 472.3 43.1 470.8 Q45.8 469.3 48.8 469.8 Q51.8 470.4 54.1 471.7 Q56.4 473.0 57.4 475.2Z"/><path d="M160.0 408.0 L172.0 405.0 L184.0 410.0 L186.0 424.0 L180.0 436.0 L168.0 440.0 L160.0 438.0 L154.0 432.0 L154.0 404.0 L158.0 400.0Z"/><path d="M169.3 451.6 Q169.4 455.0 168.3 457.0 Q167.2 458.9 166.6 461.8 Q166.1 464.8 164.7 463.5 Q163.3 462.3 162.6 460.6 Q161.8 458.9 161.2 457.0 Q160.6 455.0 160.5 452.0 Q160.4 449.0 161.9 448.5 Q163.4 448.0 164.7 446.6 Q166.1 445.2 167.6 446.7 Q169.2 448.2 169.3 451.6Z"/><path d="M183.2 363.6 Q184.8 365.6 184.3 368.2 Q183.8 370.8 182.3 372.8 Q180.9 374.9 178.4 375.9 Q175.9 376.8 173.3 375.6 Q170.7 374.3 169.6 371.4 Q168.6 368.5 168.8 365.5 Q169.1 362.6 171.6 361.8 Q174.1 361.0 175.9 360.5 Q177.7 360.0 179.7 360.8 Q181.6 361.6 183.2 363.6Z"/><path d="M153.2 432.5 Q156.0 434.0 153.2 435.5 Q150.4 437.0 148.1 438.5 Q145.9 440.0 142.7 438.9 Q139.6 437.8 137.4 437.1 Q135.3 436.4 133.6 435.2 Q131.9 434.0 131.5 432.0 Q131.1 430.0 134.5 428.8 Q137.8 427.5 142.0 427.6 Q146.2 427.6 148.2 429.3 Q150.3 431.0 153.2 432.5Z"/><path d="M199.5 423.1 Q198.4 425.6 196.2 427.0 Q193.9 428.5 191.6 428.6 Q189.2 428.8 188.5 426.8 Q187.8 424.8 185.4 423.2 Q183.1 421.5 185.9 419.5 Q188.8 417.4 190.3 414.1 Q191.7 410.7 194.9 410.7 Q198.0 410.6 197.9 414.1 Q197.7 417.6 199.1 419.1 Q200.5 420.6 199.5 423.1Z"/><path d="M188.0 381.6 Q189.2 384.0 188.7 387.0 Q188.2 390.0 186.0 390.7 Q183.8 391.4 182.1 391.0 Q180.4 390.6 179.2 389.2 Q178.0 387.9 176.2 385.9 Q174.4 384.0 176.2 382.1 Q178.0 380.1 179.0 378.1 Q180.1 376.0 181.8 377.0 Q183.5 378.0 185.2 378.6 Q186.9 379.2 188.0 381.6Z"/><path d="M222.0 390.0 L232.0 384.0 L246.0 380.0 L258.0 376.0 L270.0 380.0 L276.0 392.0 L270.0 404.0 L268.0 418.0 L262.0 432.0 L252.0 440.0 L240.0 436.0 L232.0 440.0 L224.0 432.0 L228.0 420.0 L222.0 410.0Z"/><path d="M284.9 451.7 Q290.9 454.5 285.4 457.7 Q279.8 460.8 278.1 466.1 Q276.4 471.4 271.0 469.9 Q265.7 468.4 260.1 466.9 Q254.6 465.3 253.7 459.9 Q252.8 454.5 256.6 451.0 Q260.3 447.6 262.3 442.2 Q264.4 436.9 269.8 438.9 Q275.2 440.8 277.1 444.8 Q278.9 448.8 284.9 451.7Z"/><path d="M284.5 380.5 Q280.9 385.8 284.5 389.0 Q288.0 392.2 284.5 396.0 Q281.0 399.7 275.4 401.8 Q269.8 403.9 264.3 404.2 Q258.9 404.5 253.3 405.2 Q247.6 405.9 243.7 403.8 Q239.7 401.6 233.3 399.4 Q226.8 397.3 234.4 392.9 Q241.9 388.5 239.6 383.5 Q237.3 378.5 243.1 374.7 Q249.0 371.0 256.0 373.3 Q263.1 375.7 271.3 371.9 Q279.5 368.0 283.8 371.6 Q288.0 375.3 284.5 380.5Z"/><path d="M261.3 349.1 Q263.9 351.0 261.8 353.3 Q259.7 355.6 258.0 357.3 Q256.3 358.9 254.0 359.0 Q251.7 359.0 248.6 358.4 Q245.6 357.9 245.6 354.4 Q245.6 351.0 246.8 348.6 Q248.1 346.2 249.9 344.5 Q251.6 342.8 253.9 343.2 Q256.1 343.6 257.4 345.4 Q258.7 347.1 261.3 349.1Z"/><path d="M280.7 352.4 Q280.9 357.1 283.4 360.7 Q285.9 364.3 282.6 366.3 Q279.2 368.3 276.5 371.7 Q273.9 375.0 270.9 371.6 Q267.9 368.2 266.0 365.7 Q264.1 363.2 263.1 359.8 Q262.2 356.4 264.7 354.3 Q267.2 352.2 269.8 350.6 Q272.3 349.0 276.5 348.3 Q280.6 347.7 280.7 352.4Z"/><path d="M263.5 413.8 Q266.2 419.0 264.3 424.6 Q262.5 430.3 258.1 433.5 Q253.7 436.7 248.9 439.7 Q244.0 442.7 238.3 441.3 Q232.6 439.8 230.3 434.3 Q228.0 428.8 225.8 423.9 Q223.6 419.0 228.1 415.5 Q232.6 412.1 233.2 406.2 Q233.7 400.3 238.9 400.4 Q244.0 400.6 249.2 400.3 Q254.4 400.1 257.7 404.4 Q260.9 408.7 263.5 413.8Z"/><path d="M258.2 367.4 Q259.9 370.1 258.4 372.8 Q256.9 375.5 256.8 380.6 Q256.7 385.7 252.1 383.3 Q247.5 380.8 243.8 380.7 Q240.0 380.6 238.8 377.3 Q237.6 374.0 238.3 370.8 Q239.1 367.6 240.6 363.6 Q242.1 359.7 246.9 357.9 Q251.6 356.1 254.1 360.4 Q256.6 364.7 258.2 367.4Z"/><path d="M280.9 352.1 Q283.0 354.0 281.1 356.0 Q279.3 358.0 277.6 360.0 Q275.9 361.9 273.2 361.5 Q270.4 361.0 268.9 359.3 Q267.4 357.6 266.8 355.8 Q266.1 354.0 266.7 352.1 Q267.2 350.3 268.3 347.2 Q269.4 344.2 272.6 345.3 Q275.8 346.4 277.3 348.3 Q278.9 350.2 280.9 352.1Z"/><path d="M287.8 403.5 Q289.5 406.0 288.9 409.8 Q288.3 413.6 286.0 414.4 Q283.8 415.2 282.2 414.3 Q280.5 413.5 279.3 412.1 Q278.0 410.8 277.8 408.4 Q277.5 406.0 277.5 403.3 Q277.6 400.7 279.1 399.8 Q280.6 398.8 282.1 398.4 Q283.6 398.0 284.9 399.5 Q286.2 401.0 287.8 403.5Z"/><path d="M221.0 434.5 Q222.3 436.0 222.2 438.2 Q222.0 440.3 219.4 441.5 Q216.8 442.6 214.2 442.0 Q211.7 441.4 209.8 440.4 Q207.9 439.3 206.9 437.7 Q205.9 436.0 206.9 434.4 Q208.0 432.7 209.9 431.8 Q211.8 430.8 213.8 431.3 Q215.8 431.8 217.7 432.4 Q219.6 432.9 221.0 434.5Z"/><path d="M262.4 475.4 Q265.6 477.5 261.4 479.2 Q257.2 480.9 255.1 482.8 Q253.0 484.6 248.8 484.9 Q244.7 485.2 240.4 484.0 Q236.2 482.9 237.2 480.2 Q238.2 477.5 239.1 475.6 Q239.9 473.7 242.8 472.6 Q245.6 471.4 249.2 471.1 Q252.8 470.8 256.0 472.0 Q259.2 473.2 262.4 475.4Z"/><path d="M299.4 475.6 Q301.9 477.0 300.9 479.5 Q299.8 482.0 297.7 483.6 Q295.6 485.1 293.6 483.4 Q291.5 481.7 290.2 480.9 Q288.9 480.0 287.0 478.5 Q285.1 477.0 285.6 474.5 Q286.0 471.9 288.4 471.2 Q290.9 470.4 293.1 470.2 Q295.3 470.0 296.1 472.1 Q297.0 474.1 299.4 475.6Z"/><path d="M392.0 448.9 Q392.7 449.7 392.2 450.6 Q391.8 451.5 390.0 451.8 Q388.3 452.1 386.6 451.8 Q384.9 451.4 384.1 450.6 Q383.4 449.7 384.3 448.9 Q385.3 448.2 386.8 447.9 Q388.3 447.6 389.8 447.9 Q391.3 448.2 392.0 448.9Z"/><path d="M322.0 239.3 Q322.5 240.0 322.1 240.8 Q321.7 241.6 320.5 241.9 Q319.3 242.2 318.4 241.6 Q317.4 240.9 317.5 240.0 Q317.5 239.1 318.5 238.6 Q319.4 238.0 320.4 238.3 Q321.5 238.6 322.0 239.3Z"/><path d="M347.0 299.4 Q347.6 300.0 346.9 300.5 Q346.1 301.0 345.2 301.5 Q344.3 302.1 343.7 301.4 Q343.1 300.7 342.6 299.8 Q342.2 299.0 343.3 298.6 Q344.4 298.1 345.4 298.4 Q346.4 298.8 347.0 299.4Z"/><path d="M353.8 311.3 Q353.9 312.0 353.6 312.6 Q353.3 313.2 352.4 313.5 Q351.4 313.9 350.4 313.4 Q349.5 312.9 349.9 312.1 Q350.3 311.4 350.9 311.0 Q351.6 310.7 352.6 310.6 Q353.6 310.6 353.8 311.3Z"/><path d="M332.1 299.3 Q332.6 300.0 332.0 300.7 Q331.5 301.3 330.5 301.4 Q329.5 301.5 328.6 301.1 Q327.6 300.8 328.0 300.1 Q328.4 299.4 329.0 299.0 Q329.5 298.5 330.5 298.5 Q331.5 298.6 332.1 299.3Z"/><path d="M340.6 409.1 Q341.2 410.0 340.4 410.8 Q339.7 411.5 338.5 411.8 Q337.3 412.2 336.5 411.5 Q335.8 410.8 335.9 410.1 Q336.1 409.3 336.8 408.9 Q337.5 408.5 338.8 408.4 Q340.0 408.2 340.6 409.1Z"/><path d="M322.1 419.4 Q322.8 420.0 322.1 420.6 Q321.4 421.2 320.5 421.2 Q319.6 421.3 318.7 421.0 Q317.7 420.8 317.6 420.0 Q317.5 419.1 318.5 418.7 Q319.5 418.3 320.4 418.6 Q321.3 418.8 322.1 419.4Z"/><path d="M402.2 299.2 Q402.8 300.0 402.4 300.9 Q402.0 301.8 400.7 301.6 Q399.5 301.5 399.0 301.0 Q398.4 300.6 398.2 299.9 Q398.0 299.3 398.7 298.8 Q399.5 298.3 400.6 298.4 Q401.7 298.4 402.2 299.2Z"/><path d="M396.7 344.4 Q397.0 345.0 396.9 345.8 Q396.8 346.7 395.6 346.8 Q394.4 347.0 393.6 346.4 Q392.7 345.8 392.9 345.1 Q393.1 344.4 393.7 343.6 Q394.3 342.8 395.3 343.3 Q396.4 343.8 396.7 344.4Z"/><path d="M412.3 379.3 Q413.0 380.0 412.1 380.6 Q411.3 381.2 410.4 381.3 Q409.5 381.5 408.5 381.2 Q407.4 380.9 407.7 380.1 Q408.0 379.3 408.7 378.5 Q409.3 377.8 410.4 378.2 Q411.6 378.6 412.3 379.3Z"/><path d="M416.7 469.3 Q417.0 470.0 416.7 470.6 Q416.3 471.2 415.4 471.4 Q414.5 471.7 413.5 471.3 Q412.5 470.9 412.3 469.9 Q412.1 469.0 413.4 468.8 Q414.6 468.6 415.5 468.7 Q416.5 468.7 416.7 469.3Z"/><path d="M364.0 189.1 Q364.1 190.0 364.0 190.9 Q364.0 191.8 362.8 191.6 Q361.6 191.4 361.0 191.0 Q360.4 190.6 360.3 190.0 Q360.3 189.4 360.9 188.9 Q361.5 188.4 362.7 188.3 Q363.9 188.3 364.0 189.1Z"/><path d="M302.5 139.1 Q303.1 140.0 302.4 140.8 Q301.8 141.6 300.5 141.9 Q299.3 142.3 298.2 141.6 Q297.2 141.0 297.6 140.1 Q298.0 139.3 298.8 138.9 Q299.5 138.6 300.8 138.4 Q302.0 138.2 302.5 139.1Z"/><path d="M217.1 149.4 Q217.9 150.0 217.0 150.5 Q216.1 151.0 215.3 151.5 Q214.4 151.9 213.7 151.3 Q212.9 150.7 212.9 150.0 Q212.9 149.3 213.7 148.9 Q214.5 148.4 215.4 148.6 Q216.2 148.9 217.1 149.4Z"/><path d="M151.5 149.4 Q151.8 150.0 151.6 150.6 Q151.4 151.2 150.4 151.4 Q149.5 151.6 148.3 151.3 Q147.1 151.0 147.7 150.2 Q148.3 149.4 148.8 148.6 Q149.3 147.8 150.3 148.3 Q151.3 148.8 151.5 149.4Z"/><path d="M61.9 129.4 Q62.3 130.0 62.1 130.8 Q61.9 131.7 60.6 131.9 Q59.3 132.1 58.6 131.4 Q57.8 130.7 58.1 130.1 Q58.4 129.4 58.9 128.9 Q59.5 128.3 60.4 128.5 Q61.4 128.7 61.9 129.4Z"/><path d="M42.5 119.2 Q43.1 120.0 42.2 120.6 Q41.3 121.1 40.4 121.4 Q39.5 121.6 38.4 121.3 Q37.2 121.0 37.8 120.2 Q38.4 119.4 38.9 118.9 Q39.5 118.3 40.7 118.3 Q41.9 118.3 42.5 119.2Z"/><path d="M58.7 135.8 Q59.1 137.5 57.6 138.3 Q56.2 139.1 55.2 139.4 Q54.1 139.7 53.1 139.2 Q52.1 138.7 50.8 137.5 Q49.4 136.3 50.9 135.3 Q52.3 134.4 53.6 133.5 Q55.0 132.6 56.6 133.3 Q58.3 134.1 58.7 135.8Z"/><path d="M42.1 132.1 Q42.9 133.0 42.7 134.1 Q42.5 135.2 41.8 136.5 Q41.1 137.8 39.7 137.4 Q38.2 136.9 37.7 135.7 Q37.2 134.6 37.0 133.3 Q36.7 132.0 37.9 131.5 Q39.2 130.9 40.3 131.1 Q41.4 131.3 42.1 132.1Z"/><path d="M37.5 154.0 Q36.8 154.9 36.2 156.1 Q35.5 157.3 33.9 157.1 Q32.3 156.8 31.8 155.4 Q31.2 153.9 31.3 152.3 Q31.4 150.8 33.0 150.9 Q34.5 151.0 35.6 151.1 Q36.6 151.2 37.4 152.1 Q38.2 153.0 37.5 154.0Z"/><path d="M66.6 138.9 Q67.6 139.0 67.9 140.2 Q68.2 141.3 67.4 141.9 Q66.6 142.5 65.9 142.5 Q65.1 142.6 64.3 142.2 Q63.6 141.8 63.3 141.0 Q63.1 140.1 63.3 139.1 Q63.5 138.1 64.5 138.4 Q65.5 138.8 66.6 138.9Z"/><path d="M42.3 115.7 Q42.2 117.0 41.3 118.1 Q40.3 119.3 39.3 119.5 Q38.3 119.8 37.9 118.8 Q37.5 117.9 38.0 116.5 Q38.5 115.1 39.4 114.2 Q40.3 113.4 41.0 113.2 Q41.8 113.1 42.1 113.8 Q42.4 114.4 42.3 115.7Z"/><path d="M60.3 139.9 Q61.4 141.2 60.8 142.6 Q60.2 143.9 59.7 144.8 Q59.1 145.6 57.9 145.9 Q56.8 146.3 56.2 144.7 Q55.6 143.0 55.7 141.8 Q55.9 140.6 56.5 140.0 Q57.1 139.3 58.1 139.0 Q59.2 138.6 60.3 139.9Z"/><path d="M86.2 163.3 Q87.1 164.5 87.7 166.1 Q88.4 167.7 87.0 169.0 Q85.6 170.2 83.8 170.2 Q81.9 170.3 81.4 168.6 Q80.8 166.9 81.0 165.7 Q81.2 164.5 82.0 163.8 Q82.8 163.0 84.1 162.6 Q85.4 162.2 86.2 163.3Z"/><path d="M48.9 102.1 Q49.7 104.0 49.1 105.7 Q48.6 107.3 47.4 107.9 Q46.2 108.4 44.9 108.2 Q43.7 108.0 42.7 106.6 Q41.8 105.3 42.0 103.4 Q42.2 101.6 43.5 100.5 Q44.8 99.5 46.4 99.9 Q48.1 100.3 48.9 102.1Z"/><path d="M83.2 154.7 Q83.7 155.8 83.3 156.9 Q82.8 158.0 82.4 159.3 Q81.9 160.7 81.3 159.5 Q80.7 158.4 80.3 157.2 Q79.9 156.0 80.2 154.7 Q80.5 153.4 81.0 152.4 Q81.5 151.4 82.1 152.5 Q82.7 153.6 83.2 154.7Z"/><path d="M83.8 123.4 Q84.5 125.7 84.8 127.3 Q85.1 128.8 84.6 129.5 Q84.2 130.2 83.5 130.6 Q82.7 131.1 81.9 129.0 Q81.0 126.9 80.8 125.2 Q80.7 123.5 81.0 122.5 Q81.4 121.6 82.3 121.3 Q83.1 121.1 83.8 123.4Z"/><path d="M37.8 119.3 Q38.6 120.5 38.1 121.7 Q37.7 123.0 36.9 124.3 Q36.1 125.6 34.3 125.6 Q32.6 125.5 31.2 124.6 Q29.7 123.8 30.9 122.4 Q32.0 121.0 32.8 120.0 Q33.6 118.9 35.3 118.5 Q37.0 118.1 37.8 119.3Z"/><path d="M39.0 102.6 Q39.9 103.6 39.4 105.0 Q38.9 106.4 37.3 106.3 Q35.6 106.1 34.5 106.1 Q33.3 106.0 32.9 105.1 Q32.6 104.2 32.9 103.3 Q33.2 102.4 34.2 101.2 Q35.2 100.1 36.6 100.8 Q38.0 101.5 39.0 102.6Z"/><path d="M42.1 147.3 Q42.9 148.0 42.4 149.1 Q41.9 150.1 41.3 151.1 Q40.7 152.0 39.9 151.3 Q39.1 150.6 38.8 149.5 Q38.5 148.5 38.4 147.2 Q38.3 146.0 39.1 145.2 Q39.9 144.4 40.6 145.5 Q41.2 146.5 42.1 147.3Z"/><path d="M45.5 118.4 Q45.2 120.0 43.9 121.1 Q42.6 122.1 41.2 121.4 Q39.7 120.7 38.8 119.7 Q37.8 118.7 38.3 117.4 Q38.7 116.1 39.7 115.3 Q40.7 114.5 42.0 114.7 Q43.3 114.8 44.5 115.8 Q45.7 116.7 45.5 118.4Z"/><path d="M44.4 127.4 Q44.6 128.7 43.3 128.7 Q42.0 128.8 41.0 128.2 Q40.0 127.7 39.2 126.8 Q38.3 126.0 38.2 124.6 Q38.1 123.3 39.4 123.3 Q40.8 123.3 41.9 123.6 Q43.1 124.0 43.6 125.0 Q44.2 126.1 44.4 127.4Z"/><path d="M43.7 114.7 Q45.1 114.6 45.0 115.9 Q44.9 117.3 43.8 118.0 Q42.7 118.8 41.7 119.1 Q40.7 119.4 39.7 119.2 Q38.7 119.0 38.4 117.9 Q38.2 116.8 39.0 115.7 Q39.8 114.5 41.0 114.6 Q42.3 114.7 43.7 114.7Z"/><path d="M36.6 136.9 Q36.8 138.3 36.9 139.8 Q36.9 141.3 36.0 141.7 Q35.1 142.0 34.3 141.5 Q33.6 140.9 33.2 139.7 Q32.8 138.6 32.6 136.9 Q32.5 135.2 33.6 135.1 Q34.6 135.1 35.5 135.3 Q36.4 135.6 36.6 136.9Z"/><path d="M83.4 129.8 Q84.4 130.6 84.6 131.9 Q84.9 133.2 84.4 134.6 Q84.0 136.0 82.4 136.2 Q80.8 136.4 80.0 134.8 Q79.2 133.3 79.2 132.1 Q79.1 130.8 79.5 129.5 Q79.8 128.1 81.1 128.6 Q82.4 129.1 83.4 129.8Z"/><path d="M80.9 154.1 Q80.4 154.9 79.7 156.3 Q79.0 157.7 78.1 157.2 Q77.1 156.7 76.4 155.9 Q75.7 155.2 76.5 153.9 Q77.2 152.7 78.1 151.5 Q79.1 150.3 80.1 150.8 Q81.0 151.2 81.2 152.2 Q81.3 153.2 80.9 154.1Z"/><path d="M42.2 160.1 Q43.0 161.3 43.8 162.5 Q44.6 163.7 43.7 165.0 Q42.9 166.4 41.2 166.9 Q39.5 167.5 38.8 165.9 Q38.1 164.3 37.3 163.0 Q36.5 161.7 37.6 160.7 Q38.7 159.6 40.1 159.2 Q41.5 158.9 42.2 160.1Z"/><path d="M87.7 166.4 Q87.0 167.6 86.4 168.3 Q85.9 169.1 85.0 169.4 Q84.2 169.7 83.5 169.1 Q82.8 168.6 83.5 167.4 Q84.2 166.2 84.8 165.3 Q85.3 164.3 86.2 164.0 Q87.2 163.6 87.8 164.4 Q88.4 165.2 87.7 166.4Z"/><path d="M109.4 145.5 Q109.9 146.2 109.9 147.0 Q109.9 147.7 109.8 148.8 Q109.7 149.8 108.7 149.7 Q107.8 149.6 107.3 148.5 Q106.8 147.5 106.9 146.7 Q107.1 145.9 107.2 144.9 Q107.3 143.8 108.1 144.3 Q109.0 144.8 109.4 145.5Z"/><path d="M108.9 161.0 Q110.0 162.2 110.0 163.7 Q109.9 165.2 109.3 166.3 Q108.6 167.4 107.5 166.7 Q106.3 166.0 105.2 165.4 Q104.0 164.9 104.3 163.6 Q104.6 162.3 105.1 161.4 Q105.6 160.5 106.7 160.2 Q107.9 159.9 108.9 161.0Z"/><path d="M86.7 145.2 Q87.5 145.6 86.8 146.1 Q86.2 146.7 85.6 147.0 Q84.9 147.4 84.1 147.4 Q83.3 147.4 82.8 147.0 Q82.3 146.5 82.6 145.9 Q82.9 145.3 83.7 145.1 Q84.5 144.9 85.2 144.9 Q85.9 144.9 86.7 145.2Z"/><path d="M109.6 140.8 Q109.9 142.5 109.1 144.9 Q108.2 147.4 107.4 146.7 Q106.5 146.1 105.7 145.9 Q104.9 145.8 104.9 143.6 Q105.0 141.4 106.0 140.1 Q107.0 138.8 108.0 136.9 Q109.0 135.1 109.2 137.1 Q109.3 139.1 109.6 140.8Z"/><path d="M114.0 156.0 Q113.9 156.6 113.4 156.8 Q112.9 157.0 112.3 156.9 Q111.6 156.7 111.3 156.1 Q111.0 155.6 110.9 155.1 Q110.9 154.6 111.3 154.3 Q111.7 154.0 112.4 154.3 Q113.0 154.5 113.5 155.0 Q114.0 155.4 114.0 156.0Z"/><path d="M70.2 245.9 Q69.7 247.8 69.0 249.2 Q68.2 250.6 67.5 250.4 Q66.8 250.3 66.0 250.1 Q65.3 250.0 65.6 248.3 Q65.9 246.5 66.7 245.4 Q67.6 244.2 68.5 243.1 Q69.5 242.1 70.1 243.1 Q70.7 244.1 70.2 245.9Z"/><path d="M49.7 249.4 Q49.0 251.1 47.9 252.1 Q46.7 253.1 45.6 253.7 Q44.5 254.3 44.6 253.0 Q44.7 251.7 45.3 250.4 Q45.8 249.0 46.8 247.6 Q47.8 246.2 48.6 246.4 Q49.3 246.6 49.8 247.2 Q50.4 247.7 49.7 249.4Z"/><path d="M73.1 227.0 Q73.7 228.5 72.4 229.5 Q71.1 230.4 69.8 231.5 Q68.4 232.6 67.8 231.1 Q67.1 229.5 66.3 227.9 Q65.4 226.3 66.5 224.5 Q67.7 222.7 69.4 222.7 Q71.1 222.7 71.8 224.1 Q72.5 225.5 73.1 227.0Z"/><path d="M81.7 237.7 Q81.7 240.5 80.9 242.6 Q80.2 244.7 79.0 246.6 Q77.8 248.6 77.2 246.1 Q76.6 243.7 75.8 241.7 Q75.0 239.8 75.7 236.9 Q76.5 233.9 77.9 233.3 Q79.4 232.7 80.6 233.8 Q81.8 234.9 81.7 237.7Z"/><path d="M66.9 202.3 Q66.5 203.6 66.4 205.0 Q66.3 206.4 64.7 206.3 Q63.2 206.1 61.7 205.6 Q60.2 205.2 59.8 203.7 Q59.5 202.2 60.8 201.6 Q62.2 201.0 63.3 200.2 Q64.5 199.5 65.9 200.2 Q67.3 200.9 66.9 202.3Z"/><path d="M86.2 239.9 Q86.4 241.2 86.1 242.6 Q85.8 244.1 84.4 245.1 Q83.0 246.1 82.1 244.6 Q81.2 243.2 80.1 241.8 Q78.9 240.3 80.3 239.1 Q81.6 237.8 82.9 236.7 Q84.3 235.5 85.1 237.0 Q86.0 238.6 86.2 239.9Z"/><path d="M55.6 237.1 Q56.0 238.0 55.7 239.4 Q55.3 240.8 54.4 240.6 Q53.4 240.3 52.8 239.9 Q52.2 239.5 51.9 238.4 Q51.6 237.4 52.1 236.5 Q52.7 235.5 53.4 235.5 Q54.1 235.4 54.7 235.7 Q55.3 236.1 55.6 237.1Z"/><path d="M59.3 191.7 Q58.5 193.2 57.5 195.0 Q56.5 196.8 54.8 196.2 Q53.2 195.7 52.1 194.4 Q51.0 193.0 52.2 191.4 Q53.5 189.8 54.5 188.2 Q55.5 186.6 56.7 187.6 Q57.9 188.6 59.0 189.4 Q60.0 190.2 59.3 191.7Z"/><path d="M45.5 172.1 Q46.5 173.5 46.5 174.9 Q46.5 176.2 46.2 177.6 Q45.8 178.9 44.5 178.5 Q43.2 178.2 42.2 177.2 Q41.2 176.1 40.7 174.6 Q40.2 173.0 41.4 172.7 Q42.6 172.3 43.6 171.5 Q44.6 170.7 45.5 172.1Z"/><path d="M82.2 222.9 Q82.2 224.9 81.2 226.3 Q80.2 227.7 78.9 228.7 Q77.6 229.6 77.0 228.1 Q76.4 226.5 75.7 224.9 Q75.0 223.2 76.2 221.7 Q77.5 220.2 78.7 220.1 Q79.9 219.9 81.1 220.4 Q82.3 220.9 82.2 222.9Z"/><path d="M43.9 202.9 Q44.5 206.1 44.1 208.3 Q43.6 210.4 42.8 212.7 Q42.0 214.9 40.7 212.8 Q39.3 210.7 37.6 209.1 Q36.0 207.5 36.8 205.2 Q37.6 202.9 38.5 201.0 Q39.5 199.0 41.4 199.4 Q43.3 199.7 43.9 202.9Z"/><path d="M64.1 197.4 Q63.7 199.2 62.4 200.9 Q61.2 202.5 60.2 202.4 Q59.3 202.2 59.3 201.0 Q59.2 199.8 59.6 198.5 Q60.0 197.3 60.9 196.0 Q61.7 194.8 62.9 193.9 Q64.1 193.0 64.4 194.3 Q64.6 195.6 64.1 197.4Z"/><path d="M70.2 244.6 Q71.0 245.4 71.2 246.7 Q71.5 248.0 70.3 248.2 Q69.1 248.4 68.3 248.4 Q67.4 248.4 66.5 247.8 Q65.6 247.1 66.1 246.1 Q66.6 245.2 67.2 244.7 Q67.7 244.2 68.6 244.0 Q69.5 243.8 70.2 244.6Z"/><path d="M44.4 205.5 Q44.0 206.7 43.3 207.6 Q42.5 208.6 41.4 208.4 Q40.2 208.1 39.1 207.4 Q38.0 206.6 38.1 205.2 Q38.2 203.8 39.4 203.2 Q40.7 202.7 42.0 202.3 Q43.3 202.0 44.1 203.2 Q44.9 204.4 44.4 205.5Z"/><path d="M83.6 206.2 Q84.4 207.4 85.4 208.5 Q86.4 209.7 85.6 210.2 Q84.8 210.7 84.0 210.7 Q83.2 210.7 82.5 210.0 Q81.7 209.4 80.9 208.3 Q80.1 207.3 80.3 206.1 Q80.5 205.0 81.6 205.0 Q82.8 205.0 83.6 206.2Z"/><path d="M69.7 215.3 Q70.5 216.1 70.6 217.2 Q70.7 218.3 70.0 218.8 Q69.4 219.4 68.5 220.0 Q67.6 220.6 66.7 219.7 Q65.8 218.8 65.7 217.6 Q65.7 216.4 66.1 215.3 Q66.5 214.3 67.7 214.4 Q68.8 214.5 69.7 215.3Z"/><path d="M53.9 286.7 Q55.1 286.6 55.0 287.7 Q54.9 288.8 53.9 289.6 Q52.9 290.4 51.8 291.3 Q50.6 292.1 50.3 291.2 Q50.0 290.4 49.5 289.8 Q49.1 289.2 49.9 288.3 Q50.7 287.4 51.7 287.1 Q52.6 286.9 53.9 286.7Z"/><path d="M63.0 305.7 Q61.9 307.1 60.8 308.7 Q59.8 310.4 59.0 309.4 Q58.2 308.5 57.4 307.9 Q56.5 307.3 56.9 305.5 Q57.3 303.7 58.9 303.3 Q60.5 302.8 61.5 302.8 Q62.5 302.8 63.3 303.6 Q64.0 304.3 63.0 305.7Z"/><path d="M65.3 295.1 Q65.5 295.9 65.2 296.5 Q64.9 297.2 63.9 297.6 Q62.9 298.0 62.2 297.5 Q61.4 297.0 61.0 296.5 Q60.5 296.1 60.9 295.5 Q61.2 295.0 62.0 294.9 Q62.8 294.7 63.9 294.6 Q65.1 294.4 65.3 295.1Z"/><path d="M66.4 294.0 Q66.9 295.2 66.5 296.7 Q66.0 298.1 65.1 297.9 Q64.2 297.7 63.2 297.9 Q62.3 298.2 62.0 296.6 Q61.7 295.1 62.2 293.9 Q62.8 292.6 63.6 291.9 Q64.4 291.1 65.2 291.9 Q65.9 292.8 66.4 294.0Z"/><path d="M60.0 315.2 Q61.2 317.1 61.7 318.5 Q62.2 320.0 62.1 321.0 Q61.9 322.0 60.9 321.6 Q59.9 321.2 58.8 320.3 Q57.6 319.5 56.5 317.6 Q55.4 315.7 55.8 314.5 Q56.2 313.2 57.5 313.2 Q58.8 313.3 60.0 315.2Z"/><path d="M77.1 316.7 Q76.7 318.1 75.6 318.8 Q74.6 319.4 73.7 319.8 Q72.7 320.1 72.5 319.2 Q72.3 318.2 72.5 316.9 Q72.8 315.6 73.9 314.8 Q75.0 313.9 75.7 314.1 Q76.5 314.2 77.0 314.8 Q77.6 315.4 77.1 316.7Z"/><path d="M51.5 308.1 Q52.3 310.5 51.2 312.2 Q50.2 313.9 49.3 315.7 Q48.4 317.5 47.5 315.5 Q46.6 313.6 45.9 312.2 Q45.3 310.9 45.6 309.2 Q46.0 307.6 46.9 306.0 Q47.8 304.5 49.3 305.1 Q50.8 305.7 51.5 308.1Z"/><path d="M64.6 295.3 Q64.6 297.2 63.4 298.4 Q62.2 299.6 60.9 300.6 Q59.6 301.6 59.1 300.0 Q58.6 298.4 58.7 296.9 Q58.8 295.4 59.4 293.5 Q59.9 291.5 61.3 291.5 Q62.7 291.5 63.7 292.5 Q64.6 293.4 64.6 295.3Z"/><path d="M54.3 357.0 Q54.1 358.8 53.1 360.4 Q52.0 362.1 50.6 361.6 Q49.3 361.2 48.1 360.4 Q47.0 359.6 47.3 357.8 Q47.6 356.0 48.7 354.5 Q49.8 353.0 51.2 353.3 Q52.5 353.7 53.5 354.5 Q54.6 355.3 54.3 357.0Z"/><path d="M63.7 357.0 Q64.5 357.4 63.9 358.0 Q63.3 358.7 62.4 359.0 Q61.5 359.2 60.4 359.3 Q59.3 359.3 59.2 358.6 Q59.2 357.8 58.9 357.0 Q58.7 356.2 60.0 356.2 Q61.3 356.2 62.0 356.4 Q62.8 356.6 63.7 357.0Z"/><path d="M84.8 352.1 Q85.4 352.9 86.2 353.8 Q87.0 354.7 86.2 355.3 Q85.3 355.9 84.5 355.9 Q83.7 355.9 83.1 355.4 Q82.5 355.0 82.3 354.3 Q82.2 353.6 82.2 352.6 Q82.2 351.6 83.3 351.4 Q84.3 351.3 84.8 352.1Z"/><path d="M109.7 336.5 Q110.5 337.4 110.7 338.5 Q110.9 339.6 110.1 339.9 Q109.3 340.3 108.6 340.6 Q107.9 341.0 107.3 340.2 Q106.7 339.4 106.2 338.4 Q105.7 337.3 106.3 336.5 Q106.9 335.7 107.9 335.6 Q108.9 335.5 109.7 336.5Z"/><path d="M82.4 351.6 Q82.8 352.8 83.0 354.8 Q83.2 356.9 81.9 357.8 Q80.7 358.7 79.4 357.9 Q78.0 357.1 78.2 355.0 Q78.4 352.8 78.6 351.5 Q78.9 350.1 79.7 349.6 Q80.6 349.2 81.3 349.8 Q82.1 350.4 82.4 351.6Z"/><path d="M124.9 336.1 Q125.3 337.0 124.6 337.9 Q123.9 338.9 123.0 338.9 Q122.1 339.0 121.4 338.4 Q120.7 337.9 120.9 336.7 Q121.0 335.6 121.7 334.9 Q122.4 334.3 123.0 334.3 Q123.7 334.3 124.1 334.8 Q124.5 335.2 124.9 336.1Z"/><path d="M95.3 346.0 Q96.0 347.0 95.3 348.0 Q94.6 348.9 93.8 349.5 Q93.0 350.0 92.0 349.9 Q91.0 349.8 90.7 348.9 Q90.5 347.9 90.6 347.1 Q90.6 346.2 91.4 345.7 Q92.2 345.2 93.4 345.1 Q94.6 345.0 95.3 346.0Z"/><path d="M114.4 355.7 Q114.6 357.5 114.3 359.1 Q113.9 360.8 113.3 362.4 Q112.6 364.1 112.0 362.6 Q111.3 361.1 110.9 359.2 Q110.5 357.3 111.0 355.4 Q111.5 353.4 112.2 353.5 Q113.0 353.7 113.6 353.8 Q114.2 353.9 114.4 355.7Z"/><path d="M181.1 374.0 Q182.2 374.4 183.0 375.8 Q183.8 377.2 183.0 378.0 Q182.2 378.8 181.2 379.3 Q180.2 379.8 179.1 378.8 Q177.9 377.8 177.7 376.6 Q177.5 375.3 177.4 373.9 Q177.3 372.4 178.7 373.0 Q180.1 373.6 181.1 374.0Z"/><path d="M215.8 399.7 Q216.4 401.2 215.7 402.5 Q214.9 403.8 214.2 404.1 Q213.5 404.4 212.7 404.1 Q212.0 403.9 211.3 402.6 Q210.5 401.3 210.8 399.3 Q211.1 397.3 212.2 397.7 Q213.4 398.2 214.3 398.2 Q215.2 398.2 215.8 399.7Z"/><path d="M193.3 365.1 Q192.3 366.8 191.1 368.2 Q189.9 369.7 189.0 369.0 Q188.0 368.3 187.3 367.5 Q186.7 366.8 187.3 365.3 Q188.0 363.9 189.1 362.3 Q190.2 360.8 191.2 361.5 Q192.2 362.1 193.3 362.7 Q194.3 363.3 193.3 365.1Z"/><path d="M157.0 397.3 Q156.1 398.8 155.2 399.7 Q154.3 400.6 153.2 401.2 Q152.1 401.8 152.0 400.7 Q151.8 399.6 152.6 398.3 Q153.3 397.0 154.1 395.7 Q155.0 394.3 155.6 394.8 Q156.3 395.2 157.1 395.5 Q157.9 395.8 157.0 397.3Z"/><path d="M172.9 383.3 Q174.1 384.2 174.9 386.2 Q175.6 388.1 175.2 389.1 Q174.7 390.1 173.6 389.5 Q172.4 388.9 171.4 387.6 Q170.3 386.4 169.7 384.8 Q169.1 383.2 169.1 381.6 Q169.0 380.0 170.3 381.2 Q171.7 382.5 172.9 383.3Z"/><path d="M199.3 359.9 Q200.0 361.2 199.5 362.2 Q198.9 363.2 198.5 363.8 Q198.1 364.4 197.4 364.3 Q196.7 364.1 195.8 363.3 Q194.9 362.5 195.1 361.2 Q195.4 359.9 196.1 359.4 Q196.7 358.9 197.6 358.7 Q198.6 358.6 199.3 359.9Z"/><path d="M163.3 408.7 Q163.5 409.6 163.4 410.6 Q163.2 411.6 162.5 412.0 Q161.8 412.5 161.0 412.2 Q160.2 411.9 159.9 410.7 Q159.6 409.5 160.0 408.4 Q160.4 407.3 161.1 407.2 Q161.9 407.0 162.5 407.4 Q163.1 407.8 163.3 408.7Z"/><path d="M155.0 374.4 Q155.2 375.6 155.5 376.8 Q155.7 378.1 154.6 378.6 Q153.4 379.1 152.3 378.8 Q151.1 378.5 151.0 377.3 Q150.9 376.1 150.9 375.0 Q150.9 374.0 151.8 373.1 Q152.6 372.3 153.7 372.8 Q154.8 373.3 155.0 374.4Z"/><path d="M178.3 371.1 Q178.1 372.8 178.0 374.3 Q177.8 375.8 177.0 376.9 Q176.3 378.0 175.7 376.6 Q175.1 375.2 174.9 374.0 Q174.7 372.7 175.0 371.4 Q175.2 370.1 175.9 369.1 Q176.7 368.0 177.6 368.6 Q178.5 369.3 178.3 371.1Z"/><path d="M206.0 409.0 Q205.9 410.0 205.2 410.8 Q204.4 411.5 203.3 411.5 Q202.3 411.6 201.5 410.8 Q200.7 410.0 200.6 408.8 Q200.4 407.5 201.5 407.0 Q202.6 406.4 203.7 406.3 Q204.8 406.2 205.4 407.1 Q206.1 408.0 206.0 409.0Z"/><path d="M269.1 199.8 Q268.7 201.1 267.5 201.7 Q266.3 202.4 265.7 201.8 Q265.1 201.2 264.3 200.8 Q263.4 200.4 264.5 199.4 Q265.5 198.4 266.2 197.7 Q266.9 196.9 268.1 196.6 Q269.2 196.3 269.4 197.4 Q269.6 198.5 269.1 199.8Z"/><path d="M266.1 184.4 Q267.0 184.8 267.2 185.8 Q267.4 186.9 266.9 187.4 Q266.5 187.9 265.8 188.2 Q265.2 188.6 264.6 187.6 Q264.0 186.7 263.7 185.9 Q263.4 185.1 263.6 184.3 Q263.8 183.6 264.5 183.9 Q265.2 184.1 266.1 184.4Z"/><path d="M262.4 207.1 Q262.5 207.9 262.1 208.7 Q261.7 209.5 260.5 209.4 Q259.3 209.4 258.4 208.8 Q257.6 208.1 257.2 207.3 Q256.9 206.4 257.6 205.9 Q258.4 205.3 259.3 205.5 Q260.3 205.6 261.3 205.9 Q262.3 206.2 262.4 207.1Z"/><path d="M182.6 188.5 Q183.9 189.6 184.8 191.6 Q185.8 193.5 185.5 195.1 Q185.1 196.6 183.6 195.8 Q182.0 194.9 180.7 193.6 Q179.3 192.3 178.5 190.2 Q177.6 188.2 178.3 187.3 Q179.1 186.5 180.3 186.9 Q181.4 187.3 182.6 188.5Z"/><path d="M229.8 230.1 Q230.7 230.6 231.1 231.7 Q231.5 232.8 230.9 233.7 Q230.3 234.6 229.2 234.8 Q228.2 234.9 227.2 234.3 Q226.2 233.7 226.0 232.6 Q225.9 231.4 226.4 230.6 Q226.9 229.7 227.9 229.7 Q228.9 229.7 229.8 230.1Z"/><path d="M191.3 177.1 Q192.1 177.7 192.5 178.9 Q193.0 180.1 192.2 180.5 Q191.4 180.9 190.6 181.2 Q189.8 181.5 188.7 180.8 Q187.7 180.1 187.5 178.8 Q187.3 177.4 187.9 176.5 Q188.5 175.7 189.5 176.0 Q190.6 176.4 191.3 177.1Z"/><path d="M198.7 187.9 Q200.1 189.6 200.8 191.4 Q201.4 193.2 201.2 194.6 Q200.9 196.1 199.5 195.7 Q198.0 195.2 196.5 194.0 Q195.0 192.8 193.9 190.6 Q192.9 188.4 194.1 187.8 Q195.3 187.3 196.3 186.8 Q197.4 186.3 198.7 187.9Z"/><path d="M188.2 245.0 Q188.6 246.3 188.1 247.4 Q187.5 248.4 186.8 249.0 Q186.1 249.5 185.0 249.5 Q184.0 249.4 184.2 247.9 Q184.3 246.5 184.2 245.3 Q184.2 244.2 185.0 244.1 Q185.8 243.9 186.8 243.8 Q187.7 243.7 188.2 245.0Z"/><path d="M232.1 208.2 Q232.3 209.3 231.3 209.7 Q230.3 210.1 229.5 209.7 Q228.7 209.4 227.8 208.9 Q227.0 208.5 227.1 207.5 Q227.2 206.6 227.9 206.0 Q228.5 205.3 229.5 205.5 Q230.5 205.8 231.3 206.5 Q232.0 207.2 232.1 208.2Z"/><path d="M199.5 207.5 Q200.3 208.1 200.1 209.1 Q199.9 210.1 199.1 210.8 Q198.3 211.4 197.2 211.9 Q196.1 212.5 195.7 211.5 Q195.4 210.6 195.0 209.8 Q194.7 209.0 195.6 208.4 Q196.5 207.8 197.5 207.4 Q198.6 207.0 199.5 207.5Z"/><path d="M263.2 341.3 Q262.5 343.0 261.5 345.2 Q260.6 347.5 259.1 346.7 Q257.5 345.9 257.2 344.5 Q256.9 343.1 257.0 341.5 Q257.1 340.0 258.3 338.6 Q259.5 337.2 260.6 337.7 Q261.8 338.2 262.9 338.9 Q263.9 339.6 263.2 341.3Z"/><path d="M271.8 379.8 Q271.3 381.7 270.2 383.5 Q269.1 385.4 267.8 385.1 Q266.6 384.9 266.0 383.8 Q265.5 382.6 265.8 381.0 Q266.1 379.3 267.1 377.4 Q268.0 375.4 269.7 374.9 Q271.4 374.3 271.8 376.1 Q272.3 377.9 271.8 379.8Z"/><path d="M243.6 428.6 Q244.0 430.7 244.3 433.1 Q244.6 435.5 243.2 436.0 Q241.8 436.5 240.7 435.6 Q239.5 434.7 239.0 433.1 Q238.4 431.5 238.0 429.2 Q237.6 426.8 238.9 425.6 Q240.2 424.4 241.7 425.4 Q243.2 426.4 243.6 428.6Z"/><path d="M291.1 425.3 Q291.6 427.5 291.5 429.6 Q291.3 431.7 290.1 432.1 Q289.0 432.6 287.5 433.0 Q286.0 433.3 285.6 430.9 Q285.3 428.4 285.2 426.3 Q285.2 424.1 286.3 422.8 Q287.5 421.5 289.0 422.2 Q290.6 423.0 291.1 425.3Z"/><path d="M277.4 345.9 Q278.1 346.5 277.7 347.3 Q277.4 348.2 276.7 348.8 Q276.0 349.5 275.1 349.0 Q274.3 348.6 273.3 348.2 Q272.3 347.7 272.9 346.8 Q273.5 345.9 274.2 345.1 Q274.9 344.2 275.8 344.8 Q276.8 345.3 277.4 345.9Z"/><path d="M270.7 400.3 Q271.5 401.9 271.5 403.7 Q271.5 405.4 271.0 406.6 Q270.5 407.7 269.6 406.8 Q268.6 405.9 268.1 404.3 Q267.6 402.8 266.9 400.6 Q266.3 398.4 267.2 398.0 Q268.2 397.6 269.0 398.2 Q269.9 398.7 270.7 400.3Z"/><path d="M273.9 395.4 Q273.5 397.5 272.9 399.1 Q272.2 400.8 271.1 401.2 Q269.9 401.7 268.8 400.9 Q267.8 400.2 267.6 398.3 Q267.5 396.3 268.5 394.8 Q269.5 393.4 270.8 392.1 Q272.1 390.8 273.2 392.0 Q274.2 393.3 273.9 395.4Z"/><path d="M276.4 416.3 Q276.6 417.1 276.4 418.4 Q276.3 419.6 274.5 419.6 Q272.7 419.6 271.4 418.5 Q270.0 417.4 270.5 416.3 Q271.0 415.2 271.2 414.0 Q271.5 412.8 273.2 413.0 Q274.9 413.2 275.6 414.3 Q276.2 415.5 276.4 416.3Z"/><path d="M241.7 378.3 Q242.2 379.4 243.1 380.3 Q243.9 381.3 243.3 382.0 Q242.6 382.8 241.7 382.5 Q240.8 382.3 240.2 381.6 Q239.6 381.0 239.4 380.2 Q239.2 379.5 239.5 378.8 Q239.7 378.2 240.5 377.7 Q241.2 377.3 241.7 378.3Z"/><path d="M243.5 428.6 Q243.4 430.8 242.7 432.3 Q242.0 433.7 241.0 435.4 Q239.9 437.2 238.8 435.9 Q237.6 434.7 237.8 432.5 Q238.1 430.3 238.2 428.0 Q238.3 425.7 239.7 425.3 Q241.1 424.9 242.3 425.7 Q243.5 426.4 243.5 428.6Z"/><path d="M299.3 403.9 Q299.4 405.2 298.5 406.3 Q297.7 407.4 296.0 407.2 Q294.4 407.1 293.1 406.1 Q291.9 405.1 292.4 403.9 Q292.9 402.8 293.3 401.7 Q293.8 400.6 295.3 400.8 Q296.7 400.9 298.0 401.7 Q299.2 402.6 299.3 403.9Z"/><path d="M227.1 432.3 Q227.6 433.0 227.5 434.2 Q227.4 435.5 226.4 435.7 Q225.4 436.0 224.6 435.4 Q223.9 434.8 223.7 433.9 Q223.4 433.0 223.7 432.2 Q224.0 431.4 224.7 430.8 Q225.3 430.2 225.9 430.8 Q226.5 431.5 227.1 432.3Z"/><path d="M159.4 445.2 Q159.4 446.9 158.5 447.8 Q157.5 448.7 156.3 449.4 Q155.2 450.1 153.9 449.3 Q152.6 448.6 152.2 447.2 Q151.7 445.8 152.3 444.2 Q152.8 442.7 154.4 443.2 Q156.0 443.7 157.7 443.7 Q159.4 443.6 159.4 445.2Z"/><path d="M148.0 455.3 Q148.5 456.4 147.7 457.5 Q146.9 458.5 145.6 458.8 Q144.2 459.0 143.0 458.2 Q141.8 457.3 142.1 455.9 Q142.4 454.5 143.2 453.6 Q143.9 452.6 145.3 452.0 Q146.6 451.3 147.1 452.8 Q147.6 454.2 148.0 455.3Z"/><path d="M145.1 444.6 Q145.0 445.5 144.3 446.1 Q143.7 446.7 142.8 446.3 Q141.9 445.9 141.0 445.6 Q140.2 445.3 140.0 444.5 Q139.8 443.6 140.4 442.9 Q141.0 442.1 142.0 442.5 Q143.1 442.9 144.1 443.3 Q145.2 443.6 145.1 444.6Z"/><path d="M150.0 480.5 Q149.2 481.9 148.0 482.7 Q146.8 483.5 145.3 483.6 Q143.7 483.7 143.7 482.1 Q143.8 480.4 143.5 479.0 Q143.2 477.6 144.5 476.8 Q145.9 476.0 147.1 476.6 Q148.4 477.1 149.5 478.1 Q150.7 479.0 150.0 480.5Z"/><path d="M134.6 477.6 Q135.6 479.3 135.9 481.1 Q136.2 482.9 135.6 484.1 Q135.0 485.2 133.7 485.1 Q132.4 485.1 131.6 483.1 Q130.9 481.0 130.4 479.3 Q130.0 477.6 130.7 476.6 Q131.3 475.5 132.5 475.7 Q133.7 475.9 134.6 477.6Z"/><path d="M156.3 480.9 Q155.7 483.3 154.1 484.3 Q152.5 485.3 150.9 486.2 Q149.3 487.1 148.9 485.4 Q148.4 483.7 148.6 481.8 Q148.9 480.0 150.2 478.9 Q151.4 477.7 152.8 477.2 Q154.2 476.8 155.5 477.6 Q156.8 478.5 156.3 480.9Z"/><path d="M377.2 112.7 Q377.9 113.2 378.1 114.0 Q378.4 114.7 377.7 115.3 Q377.0 115.8 376.4 116.0 Q375.7 116.2 375.1 115.9 Q374.6 115.6 374.3 114.9 Q374.0 114.3 374.4 113.6 Q374.9 112.9 375.7 112.6 Q376.6 112.3 377.2 112.7Z"/><path d="M367.4 114.6 Q367.8 115.2 368.2 116.2 Q368.6 117.2 368.1 118.0 Q367.6 118.8 366.8 118.4 Q365.9 117.9 365.6 117.0 Q365.3 116.1 365.1 115.3 Q364.9 114.5 365.4 114.2 Q365.9 113.9 366.5 113.9 Q367.0 113.9 367.4 114.6Z"/><path d="M376.0 153.2 Q375.7 154.6 374.4 155.3 Q373.2 156.0 372.2 156.0 Q371.1 155.9 370.6 155.0 Q370.1 154.1 370.6 152.6 Q371.1 151.2 372.3 150.4 Q373.5 149.7 374.5 149.8 Q375.6 149.8 376.0 150.8 Q376.3 151.7 376.0 153.2Z"/><path d="M393.8 129.2 Q394.0 130.3 393.5 131.7 Q393.0 133.1 392.4 133.7 Q391.8 134.3 391.6 133.2 Q391.3 132.1 391.2 131.0 Q391.0 129.8 391.6 128.5 Q392.1 127.2 392.7 126.4 Q393.3 125.6 393.5 126.9 Q393.6 128.1 393.8 129.2Z"/><path d="M347.2 133.4 Q347.0 134.5 346.5 135.2 Q346.1 135.8 345.4 136.6 Q344.7 137.4 343.8 136.8 Q342.9 136.3 342.9 135.0 Q342.9 133.8 343.6 133.0 Q344.2 132.2 345.0 131.6 Q345.9 131.0 346.7 131.6 Q347.4 132.3 347.2 133.4Z"/><path d="M397.2 123.0 Q396.3 124.7 395.3 125.7 Q394.4 126.7 393.7 127.0 Q393.0 127.3 392.7 126.6 Q392.5 126.0 393.1 124.6 Q393.7 123.2 394.6 122.0 Q395.5 120.8 396.4 120.3 Q397.3 119.8 397.7 120.5 Q398.1 121.2 397.2 123.0Z"/><path d="M305.5 106.3 Q306.0 107.0 306.5 107.8 Q307.0 108.6 306.5 108.9 Q306.0 109.2 305.5 109.3 Q305.0 109.3 304.2 109.0 Q303.4 108.6 303.2 107.7 Q303.0 106.7 303.1 105.8 Q303.3 104.9 304.1 105.3 Q305.0 105.6 305.5 106.3Z"/><path d="M369.2 108.5 Q369.2 109.3 369.0 110.2 Q368.8 111.2 368.2 111.7 Q367.7 112.1 367.2 111.8 Q366.6 111.5 366.6 110.1 Q366.6 108.8 367.1 107.9 Q367.7 107.0 368.2 106.7 Q368.7 106.4 369.0 107.1 Q369.2 107.7 369.2 108.5Z"/><path d="M348.9 159.9 Q348.5 161.0 347.8 161.5 Q347.1 162.0 346.6 162.1 Q346.1 162.1 345.9 161.6 Q345.8 161.1 345.9 160.5 Q346.1 159.8 346.5 158.9 Q346.9 157.9 347.4 158.2 Q347.9 158.5 348.6 158.7 Q349.3 158.8 348.9 159.9Z"/><path d="M310.4 113.6 Q311.0 114.4 311.7 115.7 Q312.3 116.9 311.3 117.2 Q310.4 117.4 309.6 117.2 Q308.9 117.1 307.9 116.6 Q306.9 116.1 307.1 115.0 Q307.3 113.8 307.6 112.8 Q307.9 111.7 308.9 112.3 Q309.9 112.9 310.4 113.6Z"/><path d="M355.2 294.8 Q354.6 295.4 354.1 296.2 Q353.6 296.9 352.8 296.6 Q352.0 296.4 351.5 295.6 Q351.0 294.8 351.4 294.0 Q351.7 293.1 352.5 293.0 Q353.4 293.0 354.1 292.9 Q354.9 292.8 355.3 293.5 Q355.7 294.2 355.2 294.8Z"/><path d="M342.4 365.9 Q342.8 366.8 342.9 368.0 Q343.1 369.1 342.2 369.2 Q341.4 369.3 340.6 369.5 Q339.7 369.8 339.3 368.7 Q338.9 367.5 339.4 366.8 Q339.8 366.1 340.2 365.7 Q340.7 365.4 341.4 365.1 Q342.1 364.9 342.4 365.9Z"/><path d="M313.2 448.4 Q313.5 448.8 313.2 449.2 Q312.8 449.6 312.5 449.8 Q312.3 450.1 311.8 450.1 Q311.4 450.0 311.4 449.4 Q311.3 448.8 311.3 448.2 Q311.3 447.5 311.7 447.4 Q312.2 447.3 312.5 447.7 Q312.8 448.0 313.2 448.4Z"/><path d="M388.0 304.7 Q388.1 305.1 387.8 305.5 Q387.6 305.8 386.8 305.8 Q386.1 305.8 385.4 305.5 Q384.7 305.2 384.8 304.8 Q384.9 304.4 384.9 303.9 Q385.0 303.5 385.8 303.6 Q386.6 303.7 387.3 304.0 Q388.0 304.2 388.0 304.7Z"/><path d="M311.4 304.7 Q312.1 305.0 312.1 305.8 Q312.0 306.5 311.6 307.0 Q311.2 307.6 310.5 307.9 Q309.7 308.1 309.0 307.6 Q308.2 307.1 308.2 306.2 Q308.1 305.2 308.7 304.7 Q309.3 304.1 310.0 304.2 Q310.7 304.3 311.4 304.7Z"/><path d="M346.3 410.9 Q346.1 411.6 346.2 412.4 Q346.2 413.2 345.6 413.3 Q344.9 413.4 344.3 413.1 Q343.7 412.8 343.8 412.1 Q343.8 411.4 344.0 410.7 Q344.1 410.1 344.7 409.7 Q345.3 409.3 345.9 409.7 Q346.4 410.2 346.3 410.9Z"/><path d="M417.4 463.4 Q417.9 464.4 417.6 465.2 Q417.4 466.1 416.9 466.7 Q416.4 467.2 415.5 467.4 Q414.6 467.5 414.2 466.5 Q413.9 465.5 413.8 464.5 Q413.6 463.6 414.3 463.0 Q415.0 462.5 416.0 462.5 Q416.9 462.4 417.4 463.4Z"/><path d="M342.0 328.5 Q342.5 329.4 342.0 330.2 Q341.6 331.0 340.9 331.2 Q340.3 331.4 339.7 331.4 Q339.0 331.4 338.5 330.9 Q338.0 330.3 338.1 329.4 Q338.2 328.6 338.8 328.0 Q339.5 327.4 340.5 327.5 Q341.5 327.7 342.0 328.5Z"/><path d="M347.3 320.3 Q347.1 320.9 347.2 321.5 Q347.2 322.2 346.6 322.4 Q345.9 322.6 345.3 322.3 Q344.7 322.0 344.6 321.3 Q344.5 320.7 344.9 320.3 Q345.2 319.9 345.7 319.5 Q346.2 319.1 346.8 319.4 Q347.4 319.7 347.3 320.3Z"/><path d="M402.5 365.2 Q402.5 365.9 402.0 366.5 Q401.6 367.1 400.7 366.8 Q399.9 366.5 399.5 366.1 Q399.1 365.6 398.8 365.0 Q398.5 364.4 398.9 363.8 Q399.4 363.3 400.1 363.6 Q400.9 363.9 401.7 364.2 Q402.4 364.5 402.5 365.2Z"/><path d="M412.1 299.6 Q412.3 300.5 411.9 301.1 Q411.5 301.7 411.1 302.2 Q410.8 302.7 410.4 302.3 Q410.0 302.0 410.0 301.1 Q410.0 300.3 410.3 299.7 Q410.5 299.0 410.8 298.8 Q411.2 298.5 411.6 298.6 Q412.0 298.7 412.1 299.6Z"/><path d="M423.9 393.0 Q423.9 393.7 423.3 394.0 Q422.6 394.3 422.0 394.0 Q421.3 393.8 420.6 393.5 Q419.8 393.3 419.7 392.6 Q419.7 391.9 420.3 391.7 Q421.0 391.6 421.7 391.5 Q422.4 391.4 423.1 391.9 Q423.8 392.3 423.9 393.0Z"/></g>
<g filter="url(#b1)" fill="#f1f1e6"><path d="M246.1 401.6 Q246.8 403.6 245.1 404.9 Q243.4 406.2 241.7 406.5 Q240.0 406.8 238.4 406.1 Q236.8 405.3 236.8 403.5 Q236.9 401.6 237.4 400.2 Q237.9 398.7 239.2 398.0 Q240.4 397.2 242.2 396.7 Q244.0 396.1 244.7 397.9 Q245.4 399.7 246.1 401.6Z"/><path d="M258.2 412.5 Q259.1 415.2 258.8 417.7 Q258.5 420.2 257.6 422.0 Q256.7 423.7 255.2 422.7 Q253.7 421.7 252.8 420.1 Q251.8 418.5 250.1 416.0 Q248.5 413.5 249.9 411.8 Q251.3 410.1 252.7 410.0 Q254.0 410.0 255.6 409.9 Q257.2 409.9 258.2 412.5Z"/><path d="M232.2 415.6 Q232.7 418.0 231.6 419.5 Q230.4 421.1 229.6 422.7 Q228.7 424.3 227.5 423.5 Q226.2 422.7 225.2 421.4 Q224.2 420.1 224.8 418.3 Q225.3 416.5 225.9 415.4 Q226.6 414.3 227.7 412.3 Q228.9 410.4 230.3 411.8 Q231.7 413.3 232.2 415.6Z"/><path d="M256.0 431.8 Q255.8 433.4 254.8 434.6 Q253.8 435.7 251.2 435.6 Q248.6 435.5 245.6 435.4 Q242.7 435.2 241.7 433.6 Q240.7 432.0 239.8 430.3 Q238.9 428.6 241.5 427.9 Q244.1 427.2 247.3 427.5 Q250.4 427.7 253.4 428.9 Q256.3 430.1 256.0 431.8Z"/><path d="M269.2 388.1 Q269.4 390.0 268.8 391.4 Q268.2 392.8 267.4 393.8 Q266.6 394.8 265.5 394.5 Q264.4 394.2 263.8 392.9 Q263.2 391.5 263.2 390.0 Q263.3 388.5 263.6 386.6 Q263.9 384.6 265.4 383.7 Q266.8 382.8 267.9 384.5 Q269.0 386.2 269.2 388.1Z"/><path d="M254.1 386.7 Q255.1 388.0 254.4 389.6 Q253.8 391.2 252.2 391.1 Q250.5 390.9 249.2 391.3 Q247.9 391.7 247.2 390.5 Q246.5 389.3 246.8 388.1 Q247.1 386.9 247.3 385.3 Q247.4 383.6 249.0 384.1 Q250.6 384.6 251.9 385.0 Q253.2 385.3 254.1 386.7Z"/><path d="M273.6 403.1 Q274.3 405.0 274.1 407.9 Q273.9 410.7 272.8 411.7 Q271.6 412.6 270.6 411.6 Q269.6 410.7 268.9 409.0 Q268.3 407.3 268.5 405.2 Q268.8 403.1 268.9 400.2 Q269.1 397.2 270.4 396.7 Q271.7 396.1 272.3 398.7 Q272.9 401.3 273.6 403.1Z"/><path d="M269.7 449.4 Q268.8 451.7 268.2 453.6 Q267.5 455.4 266.3 456.3 Q265.0 457.2 263.3 457.4 Q261.7 457.6 261.2 455.1 Q260.7 452.7 261.5 449.9 Q262.4 447.0 264.1 446.7 Q265.7 446.4 267.3 444.9 Q268.9 443.4 269.8 445.2 Q270.6 447.0 269.7 449.4Z"/><path d="M245.8 368.0 Q246.4 370.0 246.2 372.5 Q246.0 375.0 244.2 374.7 Q242.5 374.3 241.5 374.2 Q240.4 374.1 239.0 373.2 Q237.7 372.4 237.5 369.9 Q237.3 367.4 238.5 365.8 Q239.8 364.3 241.2 364.5 Q242.6 364.8 243.9 365.4 Q245.2 365.9 245.8 368.0Z"/><path d="M123.1 192.6 Q123.4 195.4 122.3 198.0 Q121.2 200.5 120.4 202.6 Q119.5 204.6 118.9 203.8 Q118.3 202.9 118.3 200.3 Q118.3 197.6 118.5 194.3 Q118.7 191.0 119.6 189.1 Q120.6 187.3 121.4 186.7 Q122.1 186.0 122.4 187.9 Q122.8 189.7 123.1 192.6Z"/><path d="M135.9 211.3 Q137.2 215.0 136.9 217.4 Q136.5 219.9 136.8 223.2 Q137.0 226.6 135.5 224.9 Q134.0 223.2 132.9 221.1 Q131.8 219.0 130.1 216.0 Q128.4 212.9 129.3 211.2 Q130.2 209.4 130.6 206.6 Q131.0 203.8 132.8 205.7 Q134.6 207.6 135.9 211.3Z"/><path d="M147.2 186.3 Q147.8 188.7 146.3 190.5 Q144.9 192.3 143.8 194.0 Q142.8 195.6 142.0 194.3 Q141.3 192.9 140.1 191.8 Q138.8 190.7 139.5 187.4 Q140.2 184.1 141.6 182.2 Q142.9 180.3 144.2 180.4 Q145.4 180.6 146.1 182.2 Q146.7 183.8 147.2 186.3Z"/><path d="M149.9 238.5 Q150.1 240.4 148.4 241.6 Q146.7 242.8 145.1 243.3 Q143.5 243.9 143.0 242.3 Q142.6 240.7 142.5 239.3 Q142.4 237.9 143.4 236.6 Q144.4 235.3 145.7 233.6 Q147.0 231.8 148.3 232.4 Q149.7 233.1 149.6 234.8 Q149.6 236.6 149.9 238.5Z"/><path d="M156.0 204.8 Q156.7 207.0 155.8 208.9 Q155.0 210.9 154.2 212.2 Q153.5 213.5 152.7 212.7 Q151.8 211.8 151.2 210.4 Q150.6 209.1 150.1 206.6 Q149.6 204.1 150.6 202.8 Q151.6 201.5 152.5 201.5 Q153.4 201.5 154.4 202.0 Q155.3 202.5 156.0 204.8Z"/><path d="M189.8 281.2 Q189.6 283.5 189.2 286.2 Q188.8 289.0 187.7 288.6 Q186.5 288.3 185.1 289.3 Q183.7 290.3 184.2 287.4 Q184.7 284.4 184.4 281.9 Q184.1 279.5 185.3 277.8 Q186.5 276.1 187.5 276.8 Q188.4 277.5 189.2 278.2 Q190.0 279.0 189.8 281.2Z"/><path d="M199.3 266.3 Q199.6 268.0 199.3 269.6 Q199.0 271.3 198.2 272.1 Q197.4 272.9 196.5 272.8 Q195.6 272.8 194.5 271.7 Q193.4 270.7 193.3 268.0 Q193.3 265.3 194.2 263.4 Q195.1 261.5 196.3 262.5 Q197.4 263.5 198.2 264.1 Q199.0 264.6 199.3 266.3Z"/><path d="M191.8 307.2 Q192.7 309.0 191.7 310.7 Q190.7 312.3 190.1 314.6 Q189.6 316.8 188.6 315.6 Q187.7 314.3 186.5 313.2 Q185.4 312.1 186.2 309.7 Q187.0 307.3 187.1 304.6 Q187.2 301.8 188.3 302.3 Q189.5 302.8 190.1 304.1 Q190.8 305.5 191.8 307.2Z"/><path d="M55.3 266.9 Q54.8 268.1 54.1 269.9 Q53.5 271.7 52.2 271.7 Q51.0 271.6 50.6 270.5 Q50.2 269.4 50.0 268.3 Q49.8 267.1 50.4 265.2 Q51.0 263.4 52.4 263.3 Q53.7 263.3 54.9 263.0 Q56.0 262.8 55.9 264.3 Q55.8 265.7 55.3 266.9Z"/><path d="M63.2 273.6 Q63.4 275.0 63.5 276.9 Q63.7 278.7 62.6 279.6 Q61.6 280.5 60.7 279.5 Q59.8 278.5 59.3 277.4 Q58.9 276.3 58.9 275.0 Q58.9 273.7 59.1 272.1 Q59.4 270.4 60.5 270.2 Q61.5 270.1 62.3 271.2 Q63.0 272.2 63.2 273.6Z"/><path d="M171.5 419.3 Q171.1 421.1 170.4 423.1 Q169.7 425.0 168.1 425.7 Q166.5 426.5 165.1 425.7 Q163.7 425.0 163.6 422.8 Q163.6 420.7 164.6 419.0 Q165.7 417.4 166.8 416.6 Q167.9 415.9 169.5 414.9 Q171.0 413.9 171.5 415.8 Q172.0 417.6 171.5 419.3Z"/><path d="M180.1 427.0 Q180.4 429.0 179.5 430.2 Q178.7 431.4 178.2 433.1 Q177.6 434.8 176.6 433.9 Q175.6 432.9 174.6 432.0 Q173.6 431.1 173.6 429.0 Q173.6 426.9 174.5 425.8 Q175.5 424.7 176.4 425.1 Q177.4 425.5 178.6 425.3 Q179.9 425.0 180.1 427.0Z"/><path d="M48.0 430.8 Q49.4 432.3 50.7 434.3 Q52.0 436.3 51.1 437.1 Q50.3 437.9 49.4 438.0 Q48.4 438.2 47.0 438.1 Q45.6 438.0 44.7 435.9 Q43.8 433.9 43.7 432.6 Q43.6 431.3 44.0 430.3 Q44.3 429.3 45.5 429.3 Q46.7 429.3 48.0 430.8Z"/><path d="M63.7 455.4 Q64.7 456.8 65.9 458.3 Q67.1 459.9 66.9 461.1 Q66.7 462.4 65.7 462.8 Q64.8 463.2 63.4 461.9 Q62.1 460.5 60.6 459.2 Q59.1 457.9 58.5 455.9 Q58.0 454.0 58.7 452.8 Q59.4 451.7 61.0 452.9 Q62.7 454.0 63.7 455.4Z"/></g>
<g filter="url(#b2)" fill="#a9c5ee"><path d="M338.0 97.0 L347.0 97.0 L352.0 108.0 L356.0 118.0 L353.0 124.0 L348.0 120.0 L344.0 110.0Z"/><path d="M368.0 97.0 L378.0 97.0 L379.0 108.0 L376.0 116.0 L371.0 114.0 L369.0 106.0Z"/><path d="M331.1 105.2 Q331.1 106.5 330.2 107.4 Q329.2 108.3 328.3 108.7 Q327.4 109.2 326.6 108.8 Q325.7 108.4 325.6 107.1 Q325.5 105.9 326.0 104.7 Q326.5 103.5 327.3 102.4 Q328.1 101.2 329.2 101.3 Q330.4 101.3 330.7 102.6 Q331.1 103.8 331.1 105.2Z"/><path d="M409.1 122.3 Q409.8 124.0 408.9 125.4 Q408.1 126.9 407.1 127.9 Q406.2 129.0 405.0 128.4 Q403.9 127.7 402.5 126.9 Q401.0 126.2 401.0 124.0 Q401.0 121.8 402.5 121.2 Q404.0 120.5 405.3 118.3 Q406.5 116.1 407.5 118.4 Q408.5 120.7 409.1 122.3Z"/><path d="M420.2 118.0 Q421.5 120.0 420.7 122.5 Q419.9 124.9 417.8 126.5 Q415.8 128.1 414.1 126.0 Q412.4 124.0 411.0 122.9 Q409.6 121.9 408.6 119.6 Q407.6 117.3 410.2 117.1 Q412.8 116.8 414.0 116.5 Q415.1 116.2 417.0 116.1 Q418.9 115.9 420.2 118.0Z"/><path d="M427.1 126.2 Q428.0 128.0 428.1 130.6 Q428.1 133.2 425.7 134.2 Q423.3 135.2 421.1 134.3 Q418.9 133.4 416.5 132.1 Q414.1 130.9 415.2 128.4 Q416.3 125.9 417.6 124.3 Q419.0 122.7 421.1 122.0 Q423.2 121.2 424.7 122.8 Q426.2 124.5 427.1 126.2Z"/><path d="M413.0 132.2 Q413.4 134.0 413.3 136.1 Q413.1 138.1 411.4 138.7 Q409.8 139.2 407.7 140.1 Q405.6 141.1 404.6 138.7 Q403.6 136.3 403.9 134.1 Q404.2 131.9 405.8 131.2 Q407.3 130.5 408.5 129.6 Q409.8 128.7 411.2 129.6 Q412.5 130.4 413.0 132.2Z"/><path d="M425.4 134.9 Q426.2 136.0 425.7 137.4 Q425.2 138.7 424.1 139.9 Q422.9 141.1 421.1 140.9 Q419.3 140.8 418.8 139.1 Q418.3 137.4 418.4 136.0 Q418.4 134.7 419.1 133.4 Q419.8 132.2 421.4 131.3 Q423.0 130.5 423.8 132.1 Q424.7 133.8 425.4 134.9Z"/><path d="M428.0 114.3 Q428.1 116.0 428.0 117.6 Q427.9 119.2 426.6 119.1 Q425.4 118.9 424.6 118.9 Q423.7 119.0 422.4 118.4 Q421.1 117.9 421.3 116.1 Q421.4 114.3 422.5 113.4 Q423.5 112.5 424.4 112.9 Q425.4 113.3 426.7 113.0 Q428.0 112.6 428.0 114.3Z"/><path d="M417.1 158.9 Q418.3 160.1 418.2 161.8 Q418.2 163.6 416.8 165.1 Q415.5 166.6 413.4 166.7 Q411.3 166.8 410.2 165.4 Q409.0 164.1 409.0 162.7 Q408.9 161.3 409.4 160.0 Q409.9 158.7 411.3 157.8 Q412.7 157.0 414.3 157.3 Q416.0 157.7 417.1 158.9Z"/><path d="M245.8 193.9 Q246.5 194.7 246.6 195.6 Q246.8 196.5 246.7 197.7 Q246.7 198.9 245.5 199.3 Q244.4 199.7 243.4 199.0 Q242.4 198.3 241.1 197.5 Q239.9 196.7 240.5 195.3 Q241.0 194.0 242.2 193.9 Q243.4 193.8 244.3 193.4 Q245.2 193.0 245.8 193.9Z"/><path d="M300.3 184.4 Q301.2 184.8 300.8 185.7 Q300.4 186.7 300.0 187.5 Q299.5 188.3 298.5 188.1 Q297.5 187.9 296.7 187.8 Q295.9 187.6 295.2 186.9 Q294.6 186.2 295.2 185.3 Q295.8 184.4 296.7 183.9 Q297.6 183.3 298.5 183.7 Q299.4 184.1 300.3 184.4Z"/><path d="M357.1 173.2 Q358.0 173.8 357.5 174.5 Q357.0 175.3 355.6 175.5 Q354.2 175.7 352.6 175.8 Q351.1 175.8 350.1 175.2 Q349.2 174.6 348.7 173.7 Q348.2 172.9 349.7 172.3 Q351.2 171.8 352.7 171.8 Q354.2 171.7 355.3 172.2 Q356.3 172.7 357.1 173.2Z"/><path d="M131.4 198.7 Q131.4 199.8 131.4 200.7 Q131.4 201.7 131.0 201.8 Q130.6 201.9 130.2 201.8 Q129.9 201.7 129.7 201.1 Q129.5 200.5 129.4 199.7 Q129.3 198.8 129.5 197.9 Q129.7 197.0 130.2 196.9 Q130.6 196.9 131.0 197.3 Q131.5 197.7 131.4 198.7Z"/><path d="M145.0 338.0 L152.0 336.0 L158.0 340.0 L162.0 348.0 L162.0 356.0 L154.0 356.0 L150.0 350.0 L146.0 345.0Z"/><path d="M53.6 297.6 Q54.0 298.2 53.6 298.7 Q53.1 299.3 52.2 300.0 Q51.4 300.7 49.9 300.3 Q48.4 299.9 47.1 299.5 Q45.8 299.0 46.2 298.3 Q46.6 297.5 47.6 297.1 Q48.6 296.6 49.9 296.4 Q51.2 296.3 52.2 296.7 Q53.3 297.1 53.6 297.6Z"/><path d="M170.1 368.4 Q170.3 370.0 170.0 371.3 Q169.7 372.7 169.2 373.2 Q168.7 373.6 168.1 373.5 Q167.6 373.4 167.3 372.3 Q167.0 371.3 167.1 370.1 Q167.2 368.9 167.3 367.4 Q167.4 365.9 168.1 365.9 Q168.7 365.9 169.3 366.4 Q169.9 366.8 170.1 368.4Z"/><path d="M38.0 370.5 Q38.1 371.8 37.9 373.0 Q37.8 374.1 37.0 374.4 Q36.2 374.7 35.6 374.4 Q35.0 374.1 34.1 373.6 Q33.3 373.2 33.3 371.8 Q33.4 370.4 34.1 369.8 Q34.9 369.1 35.6 368.5 Q36.4 367.8 37.2 368.5 Q37.9 369.3 38.0 370.5Z"/><path d="M147.1 398.8 Q147.4 400.0 147.3 401.5 Q147.2 403.0 146.5 404.2 Q145.8 405.5 145.0 404.7 Q144.2 403.9 143.4 402.9 Q142.7 401.9 143.0 400.3 Q143.4 398.7 143.8 397.5 Q144.2 396.3 145.0 395.7 Q145.7 395.1 146.3 396.3 Q146.8 397.5 147.1 398.8Z"/><path d="M44.3 416.2 Q44.3 417.0 44.3 417.8 Q44.3 418.5 43.6 418.7 Q42.8 419.0 42.0 419.0 Q41.3 419.0 41.0 418.3 Q40.8 417.6 40.8 417.0 Q40.8 416.4 41.2 415.9 Q41.5 415.4 42.1 415.4 Q42.8 415.3 43.6 415.4 Q44.4 415.4 44.3 416.2Z"/><path d="M49.2 402.3 Q49.2 403.0 49.1 403.7 Q49.0 404.3 48.5 404.5 Q47.9 404.6 47.4 404.7 Q46.8 404.8 46.5 404.2 Q46.2 403.6 46.2 403.0 Q46.2 402.3 46.6 402.0 Q47.0 401.6 47.5 401.5 Q47.9 401.4 48.6 401.5 Q49.2 401.5 49.2 402.3Z"/><path d="M126.8 461.6 Q127.7 462.6 126.9 463.6 Q126.2 464.6 124.8 465.0 Q123.4 465.5 121.9 465.4 Q120.3 465.4 119.4 464.5 Q118.5 463.6 118.9 462.7 Q119.3 461.7 119.4 460.2 Q119.5 458.7 121.5 458.9 Q123.6 459.2 124.7 459.9 Q125.9 460.7 126.8 461.6Z"/><path d="M190.3 272.2 Q190.6 273.0 190.3 273.8 Q190.0 274.5 189.7 275.1 Q189.4 275.6 189.0 275.8 Q188.5 276.0 188.4 274.9 Q188.3 273.8 188.2 272.9 Q188.1 272.0 188.3 271.0 Q188.5 270.0 189.0 269.8 Q189.5 269.6 189.8 270.5 Q190.0 271.4 190.3 272.2Z"/><path d="M185.2 285.7 Q185.3 286.5 185.3 287.4 Q185.3 288.3 184.9 288.5 Q184.6 288.8 184.2 289.0 Q183.8 289.2 183.7 288.2 Q183.6 287.2 183.4 286.3 Q183.2 285.5 183.6 284.9 Q183.9 284.3 184.2 284.4 Q184.5 284.4 184.8 284.7 Q185.1 284.9 185.2 285.7Z"/><path d="M247.7 315.8 Q247.8 316.5 247.8 317.4 Q247.8 318.3 247.5 318.5 Q247.2 318.7 246.8 318.9 Q246.4 319.1 246.2 318.2 Q246.0 317.4 246.1 316.5 Q246.1 315.7 246.3 315.2 Q246.6 314.6 246.9 314.3 Q247.2 313.9 247.4 314.5 Q247.7 315.1 247.7 315.8Z"/><path d="M251.5 323.7 Q251.7 324.5 251.4 325.2 Q251.1 325.8 250.9 326.4 Q250.7 327.0 250.3 326.8 Q250.0 326.7 249.8 326.0 Q249.7 325.3 249.6 324.4 Q249.4 323.5 249.7 323.0 Q250.0 322.5 250.4 322.2 Q250.7 321.8 251.0 322.3 Q251.3 322.8 251.5 323.7Z"/><path d="M384.7 240.3 Q384.8 241.0 384.6 241.6 Q384.4 242.2 383.9 242.4 Q383.3 242.6 382.7 242.5 Q382.2 242.5 381.5 242.1 Q380.8 241.8 381.0 241.1 Q381.3 240.4 381.6 239.8 Q381.9 239.1 382.6 239.3 Q383.3 239.4 383.9 239.5 Q384.6 239.7 384.7 240.3Z"/><path d="M62.7 98.1 Q62.9 98.5 62.8 99.0 Q62.6 99.5 62.2 99.6 Q61.7 99.8 61.3 99.7 Q60.9 99.5 60.6 99.2 Q60.2 99.0 60.3 98.5 Q60.3 98.1 60.6 97.8 Q60.9 97.4 61.3 97.2 Q61.8 96.9 62.2 97.3 Q62.5 97.6 62.7 98.1Z"/></g>
<g filter="url(#b2)" fill="none" stroke="#c9d9ef" stroke-linecap="round" stroke-linejoin="round"><path d="M177.0 441.7 L181.3 437.7 L186.0 432.0 L189.9 428.4 L193.4 422.6 L196.0 419.0 L199.1 413.6 L203.0 410.0 L208.5 404.5 L214.0 398.0" stroke-width="1.28"/><path d="M340.2 226.0 L341.5 232.0 L344.0 238.0 L342.0 246.0 L339.5 252.0 L339.0 255.3" stroke-width="1.76"/><path d="M356.0 262.0 L361.0 265.0 L365.0 271.0 L368.4 274.5 L376.0 280.0 L384.2 284.7 L392.0 286.5 L400.0 285.8 L408.0 282.0 L414.0 286.0 L420.0 294.0 L428.0 302.7" stroke-width="1.20"/><path d="M160.0 129.8 L165.4 130.6 L169.6 130.4 L175.0 131.0 L180.4 131.3 L184.4 131.5 L190.0 130.5 L194.6 130.6 L199.2 129.1 L205.0 129.8 L210.3 130.9 L214.2 129.8 L218.0 131.5 L221.9 128.9 L228.0 128.0 L230.5 125.0 L234.4 123.0 L232.0 116.0 L227.7 109.5" stroke-width="1.04"/><path d="M49.4 148.0 L50.0 153.0 L49.0 159.0" stroke-width="1.28"/><path d="M75.4 130.0 L76.5 136.0 L75.0 139.0" stroke-width="1.20"/><path d="M88.9 154.6 L90.0 160.0 L89.5 166.0" stroke-width="1.28"/><path d="M75.0 110.0 L77.0 115.0 L75.5 120.0" stroke-width="0.96"/><path d="M62.0 140.0 L63.0 146.0" stroke-width="0.96"/><path d="M66.0 120.0 L67.5 127.0 L66.0 132.0" stroke-width="0.96"/><path d="M194.0 199.0 L199.3 198.7 L205.0 200.0 L210.2 200.0 L216.0 199.5 L219.4 199.6 L224.1 198.9 L228.0 198.0 L233.1 196.9 L239.0 196.0" stroke-width="0.88"/><path d="M384.2 284.7 L388.0 283.0" stroke-width="0.80"/></g>
<g filter="url(#b3)" fill="none" stroke="#e7c9e6" stroke-width="0.9" stroke-linejoin="round"><path d="M129.5 126.9 L122.0 124.0 L116.3 124.7 L110.0 126.0 L103.1 129.1 L98.0 131.0 L92.5 129.6 L86.0 129.0 L78.2 131.6 L72.0 133.0 L65.2 131.2 L58.0 131.0 L50.5 134.3 L44.0 139.0 L38.5 140.0 L32.0 142.0"/><path d="M129.5 126.9 L131.0 115.0 L132.0 104.0 L131.0 97.0"/><path d="M129.5 126.9 L133.0 138.0 L135.2 144.4 L136.0 150.0 L137.3 156.4 L140.0 162.0 L145.0 172.0 L145.8 178.4 L147.6 183.6 L148.0 190.0 L149.3 198.3 L152.0 205.0 L154.4 214.3 L157.0 222.0 L160.8 230.4 L164.0 238.0 L168.6 244.2 L172.0 250.0 L175.9 255.2 L180.0 262.0"/><path d="M129.5 126.9 L136.1 128.8 L142.0 131.0 L149.0 135.3 L156.0 138.0 L162.3 142.5 L170.0 146.0 L176.7 148.9 L185.0 151.0 L193.1 149.1 L200.0 148.0 L207.6 146.3 L215.0 143.0 L222.7 141.1 L230.0 139.0 L235.5 136.9 L241.7 136.2 L248.0 135.0 L255.6 133.2 L264.3 132.0"/><path d="M264.3 132.0 L271.5 131.9 L280.0 131.0 L287.0 130.5 L292.9 131.0 L300.0 131.0 L306.6 132.1 L313.1 131.3 L320.0 132.0 L327.4 130.7 L333.4 130.4 L340.0 130.0 L348.1 129.6 L355.0 129.0 L363.3 127.7 L370.7 127.6 L378.1 127.0 L385.0 126.0 L392.4 125.0 L400.0 123.0 L407.6 121.8 L413.6 121.7 L420.5 120.7 L428.0 121.0"/><path d="M264.3 132.0 L262.8 125.5 L262.0 120.0 L259.9 113.9 L257.0 108.0 L253.8 102.2 L252.0 97.0"/><path d="M370.7 127.6 L372.0 138.0 L374.0 148.0 L376.8 155.6 L379.7 163.7 L381.3 170.1 L384.0 178.0 L385.5 185.2 L388.7 190.7 L392.0 202.0 L395.5 213.3 L397.7 218.9 L399.0 226.0 L401.1 233.2 L402.4 238.0 L404.0 245.0 L404.9 252.1 L405.3 259.5 L406.8 266.6 L408.0 274.1 L411.0 280.0 L415.0 290.0 L416.1 297.3 L417.5 304.4 L417.1 310.7 L417.7 317.4 L419.2 325.3"/><path d="M28.0 236.0 L34.5 237.6 L40.0 238.0 L47.1 235.4 L55.0 234.0 L61.7 236.1 L68.0 237.0 L74.8 240.9 L80.0 246.0"/><path d="M28.0 218.0 L34.5 220.6 L40.0 222.0 L46.4 219.7 L52.0 218.0 L62.0 224.0 L70.0 232.0"/><path d="M84.0 206.0 L95.0 204.0 L101.9 208.6 L110.0 212.0 L116.7 214.8 L124.0 218.0 L131.1 219.8 L138.0 222.0 L145.6 223.5 L152.0 226.0 L158.2 229.1 L166.0 232.0 L173.2 235.6 L180.0 238.0 L188.4 240.2 L196.0 241.0 L203.5 242.0 L209.3 242.4 L216.0 244.0 L221.6 246.1 L227.2 248.3 L234.0 250.0 L236.4 255.9 L240.0 262.0 L245.8 268.3 L250.0 276.0 L251.2 283.9 L254.0 292.0 L257.4 299.4 L262.0 306.0 L268.1 309.6 L276.0 312.0 L280.6 318.5 L284.0 324.0 L285.6 330.1 L287.5 337.0"/><path d="M160.0 238.0 L165.3 242.0 L170.0 246.0 L173.2 251.0 L176.6 257.0 L180.0 262.0"/><path d="M294.0 208.8 L302.6 208.4 L310.0 206.5 L316.7 205.8 L324.5 205.9 L331.9 205.4 L337.7 203.4 L343.2 202.1 L350.0 201.0 L356.6 200.5 L364.1 199.0 L370.0 197.0 L378.5 196.5 L385.5 194.9 L393.0 193.0"/><path d="M216.0 244.0 L223.2 241.3 L232.0 238.0 L238.2 235.0 L244.1 233.5 L250.0 230.0 L258.0 226.3 L266.0 222.0 L272.6 217.7 L280.0 214.0 L287.7 210.6 L294.0 208.8"/><path d="M294.0 273.4 L301.4 273.0 L310.0 272.0 L316.6 270.6 L323.6 270.4 L330.0 270.0 L336.8 269.5 L343.4 269.5 L350.0 269.0 L356.5 268.0 L362.8 269.0 L370.0 268.0 L376.8 266.8 L384.0 266.6 L390.0 266.5 L397.7 266.1 L406.8 265.5 L413.4 264.6 L421.0 263.3 L428.0 263.0"/><path d="M262.0 306.0 L265.5 300.0 L268.7 295.5 L272.0 290.0 L278.2 284.8 L286.0 280.0 L294.0 273.4"/><path d="M166.0 352.0 L176.0 346.0 L183.2 343.9 L192.0 342.0 L199.7 340.1 L206.0 338.0 L213.4 336.5 L220.0 334.0 L227.3 333.9 L236.0 332.0 L242.4 331.6 L248.6 332.5 L254.0 333.0 L261.4 335.3 L270.0 336.0 L278.9 337.0 L287.5 337.0 L293.1 337.7 L300.0 337.5 L305.9 336.2 L313.1 335.0 L320.0 335.0 L326.5 334.3 L332.3 334.9 L339.0 334.3 L345.9 335.2 L353.2 335.4 L360.0 335.0 L366.2 336.1 L372.8 335.2 L378.6 335.8 L384.2 336.5 L392.6 334.6 L400.0 332.0 L407.0 329.1 L412.6 328.0 L419.2 325.3 L428.0 322.0"/><path d="M163.0 357.0 L160.0 348.0 L156.0 338.0 L150.0 330.0"/><path d="M166.0 352.0 L165.0 362.0 L165.3 368.9 L164.0 375.0 L162.2 381.7 L162.0 388.0 L160.3 394.1 L160.0 400.0 L157.2 405.3 L154.1 412.3 L150.0 418.0 L145.6 423.4 L141.9 430.6 L138.0 436.0 L133.1 442.3 L128.0 450.0 L122.1 453.3 L118.0 458.0 L109.2 461.3 L105.1 465.1 L100.0 470.0 L96.1 477.6 L92.0 486.0"/><path d="M160.0 400.0 L166.3 399.0 L172.0 398.5 L178.4 398.8 L186.0 397.7 L193.1 396.7 L200.0 395.0 L208.8 394.3 L216.4 392.0 L223.3 388.7 L232.0 386.0 L237.4 383.5 L244.8 381.6 L250.2 378.6 L255.3 376.8 L262.6 376.5 L268.0 375.0 L276.4 374.0 L285.2 373.0"/><path d="M287.5 337.0 L286.1 344.1 L286.0 350.0 L285.5 358.3 L285.7 364.6 L285.2 373.0 L285.3 381.0 L286.0 390.0 L287.7 396.8 L287.2 402.7 L289.0 410.0 L289.7 415.9 L291.1 421.8 L292.0 428.0 L292.7 433.1 L294.0 440.0 L292.1 445.7 L290.0 452.0 L284.1 455.9 L280.0 460.0 L276.6 464.7 L274.0 476.0 L272.0 486.0"/><path d="M285.2 373.0 L293.5 373.7 L300.0 376.0 L306.0 377.6 L312.9 378.3 L320.0 380.0 L326.7 379.2 L333.5 379.4 L340.0 379.0 L347.5 379.2 L352.5 377.8 L360.0 377.0 L367.2 376.0 L373.8 373.9 L380.0 372.0 L386.9 369.8 L392.9 368.5 L400.0 366.0 L407.7 365.3 L414.3 362.6 L421.5 361.9 L428.0 360.0"/><path d="M28.0 386.0 L36.0 380.0 L46.0 374.0 L54.0 368.0 L58.0 363.2 L62.0 358.0 L68.7 357.1 L76.0 356.0 L83.8 356.2 L92.0 358.0 L99.7 358.7 L108.0 360.0 L116.9 359.0 L124.0 358.0 L131.8 354.5 L140.0 352.0 L145.5 350.7 L152.0 350.0 L156.8 352.6 L163.0 357.0"/><path d="M28.0 432.0 L34.0 428.0 L42.0 422.0"/><path d="M294.0 476.7 L302.7 474.8 L310.0 473.0 L317.4 471.1 L325.0 469.0 L331.6 467.2 L339.0 466.5 L345.2 464.6 L352.7 463.9 L360.0 462.0 L366.1 461.9 L371.8 461.1 L378.3 458.7 L384.2 458.6 L390.6 456.5 L398.9 453.9 L405.0 452.0 L413.2 449.9 L421.0 447.4 L428.0 446.2"/><path d="M276.6 464.7 L285.0 470.0 L294.0 476.7"/><path d="M172.0 486.0 L179.0 483.7 L186.0 480.0 L192.6 478.6 L200.0 478.0 L206.6 478.4 L215.0 480.0 L222.1 479.4 L230.0 478.0 L237.0 475.8 L245.0 474.0 L252.0 472.2 L260.0 470.0 L269.0 467.6 L276.6 464.7"/><path d="M423.0 396.6 L421.5 388.7 L421.0 380.0 L421.5 373.5 L419.6 367.2 L420.0 360.0 L420.5 352.8 L419.0 345.6 L419.6 339.9 L419.6 333.0 L419.2 325.3"/><path d="M423.0 396.6 L422.8 404.1 L424.1 412.5 L424.0 420.0 L424.1 426.8 L424.2 432.2 L424.6 438.7 L425.0 446.0 L425.4 452.4 L425.3 459.5 L425.1 465.9 L424.8 473.4 L425.9 480.2 L426.0 486.0"/><path d="M28.0 300.0 L33.2 302.2 L40.0 304.0 L46.4 301.7 L52.0 300.0 L57.3 297.4 L64.0 296.0 L69.4 294.5 L76.0 292.0 L80.5 288.0"/><path d="M406.8 266.6 L404.7 258.9 L404.0 250.0 L400.9 242.6 L398.0 235.0 L395.5 226.0"/></g>
<g filter="url(#b2)" fill="none" stroke="#f0e4ef" stroke-width="0.75" stroke-linejoin="round"><path d="M28.0 110.0 L33.9 112.8 L39.7 115.6 L45.0 118.0 L49.6 116.5 L54.5 114.5 L60.0 112.0 L66.6 115.3 L71.6 117.9 L78.0 120.0 L85.1 117.9 L90.0 116.0"/><path d="M60.0 112.0 L58.8 118.1 L59.6 123.2 L58.0 130.0"/><path d="M98.0 131.0 L97.6 137.3 L99.7 144.3 L100.0 150.0 L98.4 157.1 L96.7 162.6 L96.0 168.0"/><path d="M150.0 97.0 L149.8 101.0 L150.5 106.0 L152.0 112.0 L156.0 118.1 L160.0 124.0 L158.6 130.3 L158.4 133.9 L158.0 140.0"/><path d="M200.0 148.0 L200.6 154.2 L203.6 158.6 L204.0 165.0 L204.5 170.6 L206.4 176.1 L208.5 180.3 L210.0 185.0 L211.2 190.7 L212.9 194.6 L215.4 199.1 L216.0 205.0 L217.5 209.0 L218.3 214.8 L219.8 219.0 L220.0 225.0 L218.8 231.1 L218.3 238.6 L216.0 244.0"/><path d="M230.0 139.0 L232.8 143.6 L234.5 149.0 L237.4 154.2 L240.0 160.0 L240.8 165.6 L243.3 169.6 L245.6 174.4 L246.0 180.0"/><path d="M300.0 131.0 L301.5 136.6 L303.5 144.5 L304.0 150.0 L305.0 155.6 L307.7 159.5 L308.1 165.0 L310.0 170.0 L312.4 174.3 L313.4 180.2 L314.4 185.2 L316.0 190.0 L317.5 194.7 L318.2 200.4 L318.0 206.0"/><path d="M331.9 205.4 L333.2 212.7 L332.6 219.3 L334.0 225.0 L335.9 229.6 L334.6 234.1 L337.4 238.9 L338.1 244.2 L338.0 250.0 L339.5 254.1 L339.3 260.4 L340.1 264.6 L342.0 270.0"/><path d="M310.0 272.0 L311.7 278.1 L312.4 284.3 L311.4 288.2 L313.8 294.8 L314.0 300.0 L313.6 305.0 L314.6 309.8 L314.8 313.9 L317.4 319.6 L317.7 324.2 L317.4 329.2 L318.0 335.0"/><path d="M360.0 335.0 L360.2 339.3 L361.2 344.2 L361.7 350.0 L360.7 354.7 L362.0 360.0 L362.7 366.9 L363.0 371.4 L364.0 378.0"/><path d="M400.0 366.0 L401.4 372.5 L401.2 376.8 L400.3 382.5 L400.4 387.7 L401.7 394.1 L402.0 400.0 L402.5 404.7 L401.6 410.4 L403.3 415.1 L403.4 420.4 L404.7 425.8 L404.0 430.0 L404.7 435.3 L404.1 440.8 L405.8 446.3 L405.0 452.0"/><path d="M360.0 377.0 L360.1 382.3 L359.9 389.1 L359.9 393.7 L362.3 398.5 L361.9 404.2 L362.0 410.0 L361.8 414.3 L361.8 420.8 L363.6 425.9 L362.3 430.4 L363.3 435.3 L364.0 440.0 L363.6 445.1 L364.0 449.9 L363.0 457.3 L362.0 462.0"/><path d="M196.0 241.0 L197.4 247.5 L199.8 253.1 L200.0 260.0 L201.8 265.5 L202.7 270.5 L204.3 275.1 L206.0 280.0 L205.7 285.4 L204.6 290.3 L204.6 294.4 L204.0 300.0 L205.7 304.5 L207.9 309.9 L209.0 315.0 L210.0 320.0 L213.3 324.1 L215.9 330.3 L220.0 334.0"/><path d="M124.0 358.0 L123.6 363.6 L123.1 369.7 L121.9 373.8 L122.0 380.0 L121.7 384.9 L120.3 390.7 L119.9 395.8 L118.0 400.0 L115.5 404.7 L115.7 410.7 L112.7 414.2 L112.0 420.0 L109.5 424.1 L107.7 430.7 L106.0 434.9 L104.0 440.0"/><path d="M76.0 356.0 L75.6 361.8 L78.1 368.4 L77.4 374.0 L78.0 380.0 L80.2 385.6 L80.2 390.4 L82.2 395.0 L84.0 400.0 L84.9 404.7 L86.6 409.7 L87.4 414.3 L90.0 420.0"/><path d="M92.0 358.0 L93.5 351.0 L94.0 346.5 L96.0 340.0 L100.0 332.0"/><path d="M28.0 260.0 L33.5 260.6 L40.0 262.0 L44.4 266.7 L50.0 270.0 L56.1 268.3 L64.0 266.0 L71.8 267.3 L78.0 270.0"/><path d="M40.0 304.0 L41.2 310.0 L42.9 314.4 L44.0 320.0 L44.0 324.9 L45.7 330.5 L46.5 334.8 L48.0 340.0 L49.5 346.3 L50.1 350.9 L51.8 357.7 L52.1 363.4 L54.0 368.0"/><path d="M200.0 395.0 L201.3 399.7 L202.0 404.6 L201.5 410.6 L202.9 415.1 L204.0 420.0 L204.5 425.9 L205.6 429.0 L205.7 434.9 L206.0 440.0 L205.1 446.2 L204.1 450.8 L204.3 456.2 L202.6 461.7 L202.4 467.5 L201.4 472.4 L200.0 478.0"/><path d="M232.0 386.0 L230.5 392.4 L231.1 398.6 L231.1 403.2 L230.0 410.0 L230.2 414.3 L232.3 419.5 L231.5 426.2 L233.3 429.8 L234.0 436.0 L236.0 441.9 L237.1 445.9 L239.1 452.1 L240.5 458.8 L242.6 464.0 L242.6 468.2 L245.0 474.0"/><path d="M250.0 230.0 L252.0 233.9 L255.1 239.5 L255.5 244.6 L258.0 250.0 L258.5 255.8 L260.1 260.0 L260.8 264.0 L262.0 270.0 L261.6 275.9 L262.7 281.1 L261.5 284.8 L261.0 290.7 L261.7 295.6 L262.0 301.0 L262.0 306.0"/><path d="M172.0 250.0 L178.7 252.7 L186.0 254.0 L190.0 257.6 L195.5 258.3 L200.0 262.0"/><path d="M28.0 468.0 L33.6 465.1 L40.0 462.0 L45.8 466.1 L52.0 470.0 L55.6 474.5 L60.0 480.0"/><path d="M138.0 436.0 L142.7 438.9 L146.5 443.3 L150.0 446.0 L153.5 450.6 L157.6 455.2 L160.0 460.0 L163.2 464.2 L164.7 470.7 L166.2 476.4 L168.7 481.0 L172.0 486.0"/><path d="M390.0 266.5 L389.7 262.1 L390.9 256.6 L391.2 251.0 L392.0 244.8 L392.0 240.0 L390.4 234.7 L389.2 228.9 L388.4 221.1 L388.0 216.0"/></g>
<g filter="url(#b3)" fill="none" stroke="#ababab" stroke-width="0.65" stroke-dasharray="1.6 1.1"><path d="M186.0 97.0 L187.5 135.0 L189.3 171.5"/><path d="M302.0 96.0 L308.0 125.0 L315.4 158.0"/><path d="M277.5 168.0 L281.0 200.0 L287.0 233.4 L292.0 280.0 L296.5 315.0 L298.0 340.0 L299.0 347.0"/><path d="M178.0 263.5 L178.3 274.5"/><path d="M178.0 263.5 L220.0 260.6 L250.0 257.5 L285.6 253.7"/><path d="M287.0 233.4 L310.0 229.0 L339.0 222.3 L370.0 217.5 L397.8 213.3"/><path d="M292.0 297.0 L308.7 294.8 L340.0 290.5 L370.0 286.0 L388.7 283.5"/><path d="M28.0 328.0 L55.0 329.5 L80.0 331.0"/><path d="M129.5 331.0 L129.2 380.0 L128.8 446.0"/><path d="M128.8 446.0 L124.0 452.0 L120.0 458.0 L118.0 466.0 L118.5 486.0"/><path d="M128.8 442.8 L160.0 442.5 L190.0 441.5 L218.5 440.0 L250.0 437.5 L294.0 432.7 L340.0 426.0 L385.0 418.5 L428.0 411.3"/><path d="M32.5 398.9 L60.0 428.0 L85.0 452.0 L102.4 466.5 L110.0 476.0 L116.0 486.0"/><path d="M32.5 398.9 L32.0 360.0 L32.0 331.0"/><path d="M217.3 347.0 L218.2 380.0 L219.5 420.0 L221.0 486.0"/><path d="M181.0 345.0 L200.0 344.5 L217.3 347.0"/><path d="M181.0 331.0 L181.0 345.0"/><path d="M217.3 347.0 L250.0 347.5 L280.0 347.0 L299.0 347.0 L320.0 345.0 L332.4 343.0"/><path d="M332.4 343.0 L334.6 356.0 L338.0 390.0 L342.5 426.0"/><path d="M327.8 429.3 L330.0 455.0 L333.5 486.0"/><path d="M329.0 439.5 L355.0 436.5 L382.0 432.2"/><path d="M382.0 432.2 L384.5 450.0 L386.5 468.8"/><path d="M386.5 468.8 L392.0 472.0 L398.0 470.0 L404.0 475.0 L412.0 474.0 L420.0 478.0 L428.0 480.0"/><path d="M332.4 343.0 L360.0 341.0 L390.0 337.5 L412.0 333.5"/><path d="M399.0 226.0 L403.0 238.0 L407.5 240.0 L409.0 250.0 L411.0 266.0 L413.0 280.0 L415.0 285.0"/><path d="M415.0 285.0 L428.0 284.0"/></g>
<path d="M28.0 170.0 L55.0 171.3 L80.0 172.0 L105.0 172.5 L130.0 172.6 L162.0 172.6 L200.0 171.5 L228.0 170.2 L256.0 167.5 L285.0 163.5 L315.0 158.7 L339.0 153.5 L360.0 150.0 L373.0 147.3 L400.0 142.2 L402.0 141.8 L402.3 132.2 L406.5 132.6 L407.5 138.0 L409.0 141.0 L413.6 144.5 L420.0 145.6 L428.0 146.2" filter="url(#b3)" fill="none" stroke="#a2a2a0" stroke-width="1.6" stroke-linejoin="round"/>
<g filter="url(#b2)" transform="translate(191.5 392) rotate(-6.9)" fill="#707070" fill-opacity="0.36" font-size="48.5" font-family="Liberation Sans, sans-serif">
<text x="-1.2" y="0" textLength="32.2" lengthAdjust="spacingAndGlyphs">U</text>
<text x="39.2" y="0" textLength="37.3" lengthAdjust="spacingAndGlyphs">N</text>
<text x="84.3" y="0" textLength="8.6" lengthAdjust="spacingAndGlyphs">I</text>
<text x="96.1" y="0" textLength="31.8" lengthAdjust="spacingAndGlyphs">T</text>
<text x="128.9" y="0" textLength="25.3" lengthAdjust="spacingAndGlyphs">E</text>
<text x="154.7" y="0" textLength="36.4" lengthAdjust="spacingAndGlyphs">D</text>
<text x="208.7" y="0" textLength="32.5" lengthAdjust="spacingAndGlyphs">S</text>
</g>
<g filter="url(#b3)" font-family="Liberation Sans, sans-serif">
<text transform="translate(29.8 212.1) rotate(1.5)" font-size="7.8" fill="#505050" textLength="38.8" lengthAdjust="spacing">HINGTON</text>
<text transform="translate(182.1 216.6) rotate(-1.6)" font-size="7.8" fill="#505050" textLength="43.3" lengthAdjust="spacing">MONTANA</text>
<text transform="translate(302.6 200.1) rotate(-8.5)" font-size="7.8" fill="#505050" textLength="65.4" lengthAdjust="spacing">NORTH DAKOTA</text>
<text transform="translate(403.0 204.6) rotate(-11.7)" font-size="7.8" fill="#505050" textLength="25.5" lengthAdjust="spacing">MINN</text>
<text transform="translate(313.9 265.1) rotate(-8.6)" font-size="7.8" fill="#505050" textLength="67.7" lengthAdjust="spacing">SOUTH DAKOTA</text>
<text transform="translate(210.8 306.8) rotate(-3.6)" font-size="7.8" fill="#505050" textLength="45.8" lengthAdjust="spacing">WYOMING</text>
<text transform="translate(340.1 328.8) rotate(-9.2)" font-size="7.8" fill="#505050" textLength="46.1" lengthAdjust="spacing">NEBRASKA</text>
<text transform="translate(29.8 288.2) rotate(1.0)" font-size="7.8" fill="#505050" textLength="11.7" lengthAdjust="spacing">ON</text>
<text transform="translate(61.8 386.1) rotate(1.8)" font-size="7.8" fill="#505050" textLength="38.8" lengthAdjust="spacing">NEVADA</text>
<text transform="translate(161.0 401.8) rotate(0.0)" font-size="7.8" fill="#505050" textLength="25.0" lengthAdjust="spacing">UTAH</text>
<text transform="translate(250.6 397.5) rotate(-5.4)" font-size="7.8" fill="#505050" textLength="52.4" lengthAdjust="spacing">COLORADO</text>
<text transform="translate(381.4 379.6) rotate(-9.9)" font-size="7.8" fill="#505050" textLength="36.0" lengthAdjust="spacing">KANSAS</text>
<text transform="translate(401.8 443.6) rotate(-9.7)" font-size="7.8" fill="#505050" textLength="26.6" lengthAdjust="spacing">OKLA</text>
<text transform="translate(30.3 456.1) rotate(2.9)" font-size="7.8" fill="#505050" textLength="33.7" lengthAdjust="spacing">FORNIA</text>
<text transform="translate(132.2 125.0) rotate(0.0)" font-size="7.4" fill="#333" textLength="21.4" lengthAdjust="spacingAndGlyphs">Calgary</text>
<text transform="translate(266.0 130.6) rotate(-4.0)" font-size="7" fill="#333" textLength="18.5" lengthAdjust="spacingAndGlyphs">Regina</text>
<text transform="translate(371.8 125.0) rotate(-9.1)" font-size="7.4" fill="#333" textLength="28.6" lengthAdjust="spacingAndGlyphs">Winnipeg</text>
<text transform="translate(140.1 224.3) rotate(0.0)" font-size="7" fill="#333" textLength="19.9" lengthAdjust="spacingAndGlyphs">Helena</text>
<text transform="translate(335.3 214.6) rotate(-8.5)" font-size="7" fill="#333" textLength="25.5" lengthAdjust="spacingAndGlyphs">Bismarck</text>
<text transform="translate(408.0 263.6) rotate(-9.5)" font-size="7" fill="#333" textLength="17.0" lengthAdjust="spacingAndGlyphs">Sioux</text>
<text transform="translate(286.9 337.6) rotate(-4.7)" font-size="7.4" fill="#333" textLength="31.8" lengthAdjust="spacingAndGlyphs">Cheyenne</text>
<text transform="translate(399.5 341.0) rotate(-7.8)" font-size="7.2" fill="#333" textLength="23.5" lengthAdjust="spacingAndGlyphs">Lincoln</text>
<text transform="translate(169.0 353.1) rotate(0.0)" font-size="7.4" fill="#3a3a3a" textLength="43.3" lengthAdjust="spacingAndGlyphs">Salt Lake City</text>
<text transform="translate(287.0 370.0) rotate(-5.1)" font-size="7.6" fill="#2a2a2a" textLength="24.8" lengthAdjust="spacingAndGlyphs">Denver</text>
<text transform="translate(112.6 457.2) rotate(0.0)" font-size="8.4" fill="#2a2a2a" textLength="37.2" lengthAdjust="spacingAndGlyphs">Las Vegas</text>
<text transform="translate(279.6 461.0) rotate(-7.0)" font-size="7.4" fill="#333" textLength="26.3" lengthAdjust="spacingAndGlyphs">Santa Fe</text>
<text transform="translate(32.0 99.4) rotate(0.0)" font-size="7" fill="#444" textLength="18.0" lengthAdjust="spacingAndGlyphs">mloops</text>
<text transform="translate(213.0 99.2) rotate(0.0)" font-size="7" fill="#444" textLength="30.0" lengthAdjust="spacingAndGlyphs">Saskatoon</text>
<text transform="translate(29.0 417.8) rotate(0.0)" font-size="7" fill="#444" textLength="5.8" lengthAdjust="spacingAndGlyphs">to</text>
<text transform="translate(29.5 158.8) rotate(0.0)" font-size="7" fill="#444" textLength="2.5" lengthAdjust="spacingAndGlyphs">r</text>
</g>
<rect x="128.4" y="125.8" width="2.2" height="2.2" fill="#222"/>
<rect x="263.4" y="131.1" width="1.8" height="1.8" fill="#d0604a"/>
<rect x="369.8" y="126.7" width="1.8" height="1.8" fill="#7a4a4a"/>
<rect x="331.0" y="204.5" width="1.8" height="1.8" fill="#e07040"/>
<rect x="405.9" y="265.7" width="1.8" height="1.8" fill="#222"/>
<rect x="418.2" y="324.3" width="2.0" height="2.0" fill="#e88040"/>
<rect x="284.2" y="372.0" width="2.0" height="2.0" fill="#e06050"/>
<rect x="107.7" y="459.8" width="3.0" height="3.0" fill="#1c1c3c"/>
<rect x="275.7" y="463.8" width="1.8" height="1.8" fill="#e08040"/>
<rect x="422.1" y="395.7" width="1.8" height="1.8" fill="#222"/>
<rect x="286.7" y="336.9" width="1.6" height="1.6" fill="#e06050"/>
<rect x="162.2" y="356.2" width="1.6" height="1.6" fill="#e06050"/>
<rect x="149.8" y="223.8" width="1.4" height="1.4" fill="#a05050"/>
<text x="78.6" y="291.2" font-size="7" font-family="Liberation Sans, sans-serif" fill="#333">B</text>
<path d="M86.7 173.3 L101.2 173.8 L101.0 185.0 L100.8 196.2 L104.4 205.6 L107.5 209.8 L111.7 211.9 L114.5 216.0 L117.9 221.2 L121.5 224.5 L125.8 226.9 L124.4 231.0 L124.6 235.8 L125.8 243.1 L123.1 247.3 L124.6 250.8 L129.4 250.4 L132.5 248.3 L134.8 251.0 L136.7 254.6 L138.0 259.0 L139.8 262.9 L142.5 266.5 L145.0 270.2 L146.0 273.5 L147.5 276.5 L150.4 275.4 L153.3 275.0 L157.5 273.6 L161.7 273.3 L166.0 273.8 L170.0 273.3 L172.0 271.4 L173.5 269.2 L174.8 271.4 L176.2 272.3 L177.0 274.4 L178.4 275.4 L178.8 285.0 L179.2 293.7 L180.8 316.2 L180.8 330.9 L130.0 330.6 L80.3 330.9 L80.9 310.0 L81.7 291.4 L83.3 282.4 L80.6 281.4 L79.8 277.5 L82.5 271.2 L86.0 265.0 L89.8 258.8 L90.8 255.0 L91.9 251.5 L89.0 246.6 L86.7 242.1 L85.6 235.8 L84.2 232.7 L84.6 225.4 L85.6 206.7 L86.2 190.0Z" fill="#f4a460" stroke="#3a2412" stroke-width="1.15" stroke-linejoin="round"/>
</svg></div>
  <div class="abs" style="left:0;top:414px;width:400px;height:20.6px;background:#f4f4f4;border-top:1px solid #b5b5b5;box-sizing:border-box;"></div>
  <div class="abs" style="left:1px;top:415px;width:33px;height:17.3px;background:#d2d2d2;border-right:1px solid #bcbcbc;border-bottom:1px solid #bcbcbc;box-sizing:border-box;"></div>
  <div class="abs" style="left:34px;top:415px;width:209px;height:17px;background:#f8f8f8;border-right:1px solid #c0c0c0;"></div>
  <svg class="abs" style="left:385px;top:421px" width="10" height="6"><path d="M0.5 0.5 H8.5 L4.5 5 Z" fill="#111"/></svg>
</div>

<!-- IDAHO WINDOW -->
<div class="win" id="idwin" style="left:457.4px;top:102px;width:203.8px;height:224.1px;">
  <div class="abs" style="left:189.4px;top:6.4px;width:14px;height:14px;background:#e4e4e4;"></div>
  <div class="abs" style="left:0;top:24px;width:203px;height:1px;background:#6e6e6e;"></div>
  <svg class="abs" style="left:1.2px;top:25.3px" width="203" height="179" viewBox="458 127 203 179">
    <path d="M533.0 161.3 L541.3 161.6 L541.2 168.1 L541.1 174.6 L543.1 180.0 L544.9 182.4 L547.3 183.6 L548.9 186.0 L550.9 189.1 L552.9 190.9 L555.4 192.3 L554.6 194.7 L554.7 197.5 L555.4 201.7 L553.9 204.1 L554.7 206.2 L557.5 205.9 L559.2 204.7 L560.6 206.3 L561.7 208.4 L562.4 210.9 L563.4 213.2 L565.0 215.3 L566.4 217.4 L567.0 219.3 L567.9 221.1 L569.5 220.4 L571.2 220.2 L573.6 219.4 L576.0 219.2 L578.5 219.5 L580.8 219.2 L581.9 218.1 L582.8 216.8 L583.5 218.1 L584.4 218.6 L584.8 219.8 L585.6 220.4 L585.8 226.0 L586.1 231.0 L587.0 244.0 L587.0 252.6 L557.8 252.4 L529.3 252.6 L529.6 240.4 L530.1 229.7 L531.0 224.5 L529.5 223.9 L529.0 221.6 L530.5 218.0 L532.6 214.4 L534.7 210.8 L535.3 208.6 L535.9 206.6 L534.3 203.7 L533.0 201.1 L532.3 197.5 L531.5 195.7 L531.8 191.5 L532.3 180.6 L532.7 171.0Z" fill="#f3a35f" stroke="#33200f" stroke-width="1.15" stroke-linejoin="round"/>
  </svg>
  <div class="abs" style="left:0;top:203.5px;width:203.8px;height:20.6px;background:#f0f0f0;border-top:1px solid #c4c4c4;box-sizing:border-box;"></div>
  <div class="abs" style="left:0;top:204.5px;width:33.5px;height:17.3px;background:#d2d2d2;border-right:1px solid #bcbcbc;border-bottom:1px solid #bcbcbc;box-sizing:border-box;"></div>
  <svg class="abs" style="left:189px;top:211px" width="10" height="6"><path d="M0.5 0.5 H8.5 L4.5 5 Z" fill="#9a9a9a"/></svg>
</div>

<!-- RIGHT PANEL -->
<div id="panel" class="abs"></div>
<!-- tabs -->
<div class="abs" style="left:763px;top:76.8px;width:261px;height:1.7px;background:#d3d3d3;"></div>
<div class="abs" style="left:763px;top:61px;width:37px;height:17px;background:#f7f7f7;border:1px solid #cfcfcf;border-bottom:none;box-sizing:border-box;"></div>
<div class="abs" style="left:800px;top:61px;width:45px;height:16px;background:#c9c9c9;border:1px solid #bdbdbd;border-bottom:none;box-sizing:border-box;"></div>
<svg class="abs" style="left:998px;top:64px" width="26" height="12" viewBox="0 0 26 12"><path d="M0.8 3.6 H8 L4.4 7.4 Z" fill="#111"/><path d="M16 1.2 L24 9.2 M24 1.2 L16 9.2" stroke="#111" stroke-width="1.7" fill="none"/></svg>
<!-- component bar -->
<div class="abs" style="left:763px;top:82px;width:261px;height:17px;background:#c9c9c9;"></div>
<svg class="abs" style="left:1009px;top:88px" width="10" height="6"><path d="M0.8 0.6 H8.2 L4.5 4.6 Z" fill="#111"/></svg>
<!-- icons -->
<svg class="abs" style="left:766px;top:105px" width="14" height="14" viewBox="0 0 14 14">
 <rect x="0.5" y="0.6" width="12" height="11.8" fill="#35c4d4" stroke="#1f2a44" stroke-width="1"/>
 <path d="M1.5 5 L4.5 2 L7 4.5 L5 7.5 L2 7 Z" fill="#e9f7fb"/><path d="M7 7 L10.2 5.2 L11.6 8.6 L8.4 11 Z" fill="#e9f7fb"/><path d="M2 9.2 L5 8.8 L5.8 11.4 L2.5 11.6 Z" fill="#bfeaf2"/><rect x="1.6" y="8" width="1.6" height="1.6" fill="#d03030"/><rect x="5.6" y="5.6" width="1.5" height="1.5" fill="#d03030"/>
 <path d="M4.5 2 L8 6 L10.5 5.5 M5 7.5 L8.5 11.5" stroke="#2a3a66" stroke-width="0.7" fill="none"/>
</svg>
<svg class="abs" style="left:766px;top:165px" width="15" height="15" viewBox="0 0 15 15">
 <rect x="0.5" y="5.5" width="9" height="8" fill="#f6f6f6" stroke="#8a8a8a" stroke-width="0.8"/>
 <path d="M2 10 L4 12 L8 6.5" stroke="#2ca02c" stroke-width="1.6" fill="none"/>
 <path d="M6 11.5 L8 6 L11 1.5 L13 2.8 L10.5 7.5 Z" fill="#27b34a"/>
 <path d="M10.6 1.2 L13.2 2.8 L12.4 4.4 L9.8 2.8 Z" fill="#151515"/>
 <path d="M6 11.5 L6.8 9.2 L8 10.2 Z" fill="#222"/>
</svg>
<svg class="abs" style="left:766px;top:182px" width="13" height="12" viewBox="0 0 13 12">
 <rect x="0.7" y="0.7" width="11" height="10" fill="#fbfbff" stroke="#1e1e70" stroke-width="1.2"/>
 <rect x="0.7" y="0.7" width="11" height="2" fill="#24248a"/>
 <path d="M3 5.2 h1.6 M5.6 5.2 h1.6 M8.2 5.2 h1.6 M3 7.2 h1.6 M5.6 7.2 h1.6 M8.2 7.2 h1.6 M3 9.1 h1.6 M5.6 9.1 h1.6 M8.2 9.1 h1.6" stroke="#8f8fc8" stroke-width="1.1"/>
</svg>
<svg class="abs" style="left:766px;top:223px" width="14" height="8" viewBox="0 0 14 8"><rect x="0.9" y="1.4" width="11.2" height="4.2" fill="#ffffff" stroke="#23235e" stroke-width="0.95"/><path d="M0.9 1.4 h3 v4.2 h-3z" fill="#3e3e80"/></svg>
<svg class="abs" style="left:766px;top:238px" width="14" height="10" viewBox="0 0 14 10"><path d="M4.6 1.6 h3.8 M6.5 1.6 L3.4 6.6 M6.5 1.6 L9.8 6.6 M0.6 6.8 h4.2 M8.2 6.8 h4.6" stroke="#23235e" stroke-width="1.5" fill="none"/></svg>
<!-- compass buttons -->
<div class="abs" style="left:1001px;top:125px;width:21px;height:17px;background:#e6e6e6;border:1px solid #c4c4c4;box-sizing:border-box;"></div>
<svg class="abs" style="left:1005px;top:127px" width="13" height="13" viewBox="0 0 13 13"><path d="M6.5 2.4 L2.6 11.6 M6.5 2.4 L10.4 11.6 M3.6 8.4 Q6.5 6.4 9.6 8.4" stroke="#222" stroke-width="1" fill="none"/><circle cx="6.5" cy="2" r="1.2" fill="#222"/></svg>
<div class="abs" style="left:1001px;top:256px;width:21px;height:17px;background:#e6e6e6;border:1px solid #c4c4c4;box-sizing:border-box;"></div>
<svg class="abs" style="left:1005px;top:258px" width="13" height="13" viewBox="0 0 13 13"><path d="M6.5 2.4 L2.6 11.6 M6.5 2.4 L10.4 11.6 M3.6 8.4 Q6.5 6.4 9.6 8.4" stroke="#222" stroke-width="1" fill="none"/><circle cx="6.5" cy="2" r="1.2" fill="#222"/></svg>
<!-- mouse cursor -->
<svg class="abs" style="left:946px;top:77px" width="12" height="17" viewBox="0 0 12 17"><path d="M1 1 L1 13 L3.8 10.4 L6 15.4 L8 14.5 L5.8 9.6 L9.6 9.6 Z" fill="#fff" stroke="#111" stroke-width="0.9" stroke-linejoin="round"/></svg>

<!-- STATUS -->
<div id="status" class="abs"></div>
<div class="abs" style="left:1005px;top:559px;width:1px;height:17px;background:#dadada;"></div>
<svg class="abs" style="left:1010px;top:561px" width="13" height="13"><circle cx="6.5" cy="6.5" r="5" fill="#f4f4f4" stroke="#8c8c8c" stroke-width="0.9"/></svg>
<!-- TEXTS -->
<div class="t" style="left:24.4px;top:5.5px;font-size:10px;color:#9c9c9c;transform:scaleX(0.955);">(New Project) - Manifold System</div>
<div class="t" style="left:6.8px;top:25.5px;font-size:10px;color:#5e5e5e;transform:scaleX(0.874);">File</div>
<div class="t" style="left:32.4px;top:25.5px;font-size:10px;color:#5e5e5e;transform:scaleX(0.899);">Edit</div>
<div class="t" style="left:59.6px;top:25.5px;font-size:10px;color:#5e5e5e;transform:scaleX(0.907);">View</div>
<div class="t" style="left:91.0px;top:25.5px;font-size:10px;color:#5e5e5e;transform:scaleX(0.929);">Tools</div>
<div class="t" style="left:124.6px;top:25.5px;font-size:10px;color:#5e5e5e;transform:scaleX(0.973);">Window</div>
<div class="t" style="left:170.5px;top:25.5px;font-size:10px;color:#5e5e5e;transform:scaleX(0.938);">Help</div>
<div class="t" style="left:34.0px;top:76.5px;font-size:10px;color:#151515;transform:scaleX(0.951);-webkit-text-stroke:0.22px #151515;">Map</div>
<div class="t" style="left:33.0px;top:486.7px;font-size:9.4px;color:#151515;transform:scaleX(0.950);-webkit-text-stroke:0.22px #151515;">Idaho</div>
<div class="t" style="left:65.6px;top:486.7px;font-size:9.4px;color:#151515;transform:scaleX(0.905);-webkit-text-stroke:0.22px #151515;">Bing Maps Street Map Image : Bing Maps Street Map</div>
<div class="t" style="left:463.9px;top:107.3px;font-size:9.6px;color:#a6a6a6;transform:scaleX(0.958);">Idaho</div>
<div class="t" style="left:462.6px;top:308.4px;font-size:9.4px;color:#151515;transform:scaleX(0.959);-webkit-text-stroke:0.22px #151515;">Idaho</div>
<div class="t" style="left:767.4px;top:62.4px;font-size:9.4px;color:#151515;transform:scaleX(0.946);-webkit-text-stroke:0.22px #151515;">Project</div>
<div class="t" style="left:804.3px;top:62.4px;font-size:9.4px;color:#151515;transform:scaleX(0.941);-webkit-text-stroke:0.22px #151515;">Contents</div>
<div class="t" style="left:766.0px;top:83.9px;font-size:9.4px;color:#151515;transform:scaleX(0.912);-webkit-text-stroke:0.22px #151515;">Component</div>
<div class="t" style="left:782.1px;top:106.1px;font-size:9.4px;color:#151515;transform:scaleX(0.882);-webkit-text-stroke:0.22px #151515;">Map</div>
<div class="t" style="left:766.6px;top:126.7px;font-size:9.4px;color:#151515;transform:scaleX(0.941);-webkit-text-stroke:0.22px #151515;">Idaho Ortho</div>
<div class="t" style="left:766.6px;top:150.7px;font-size:9.4px;color:#151515;transform:scaleX(0.944);-webkit-text-stroke:0.22px #151515;">Active layer:</div>
<div class="t" style="left:782.1px;top:166.7px;font-size:9.4px;color:#151515;transform:scaleX(0.946);-webkit-text-stroke:0.22px #151515;">Idaho</div>
<div class="t" style="left:782.1px;top:182.6px;font-size:9.4px;color:#151515;transform:scaleX(0.942);-webkit-text-stroke:0.22px #151515;">Idaho Table</div>
<div class="t" style="left:766.0px;top:204.6px;font-size:9.4px;color:#151515;transform:scaleX(0.905);-webkit-text-stroke:0.22px #151515;">Fields and indexes:</div>
<div class="t" style="left:782.1px;top:220.7px;font-size:9.4px;color:#151515;transform:scaleX(0.838);-webkit-text-stroke:0.22px #151515;">Geom</div>
<div class="t" style="left:1001.0px;top:220.7px;font-size:9.4px;color:#151515;transform:scaleX(0.891);-webkit-text-stroke:0.22px #151515;">geom</div>
<div class="t" style="left:782.1px;top:236.7px;font-size:9.4px;color:#151515;transform:scaleX(0.878);-webkit-text-stroke:0.22px #151515;">Geom_x</div>
<div class="t" style="left:766.6px;top:256.5px;font-size:9.4px;color:#151515;transform:scaleX(0.941);-webkit-text-stroke:0.22px #151515;">Idaho Ortho</div>
<div class="t" style="left:766.0px;top:276.0px;font-size:9.4px;color:#151515;transform:scaleX(0.906);-webkit-text-stroke:0.22px #151515;">Records:</div>
<div class="t" style="left:834.3px;top:276.0px;font-size:9.4px;color:#151515;transform:scaleX(0.671);-webkit-text-stroke:0.22px #151515;">1</div>
<div class="t" style="left:3.0px;top:560.7px;font-size:9.4px;color:#1a1a1a;transform:scaleX(0.949);">105°7.344&#x27; W 41°13.379&#x27; N</div>

</body>
</html>
